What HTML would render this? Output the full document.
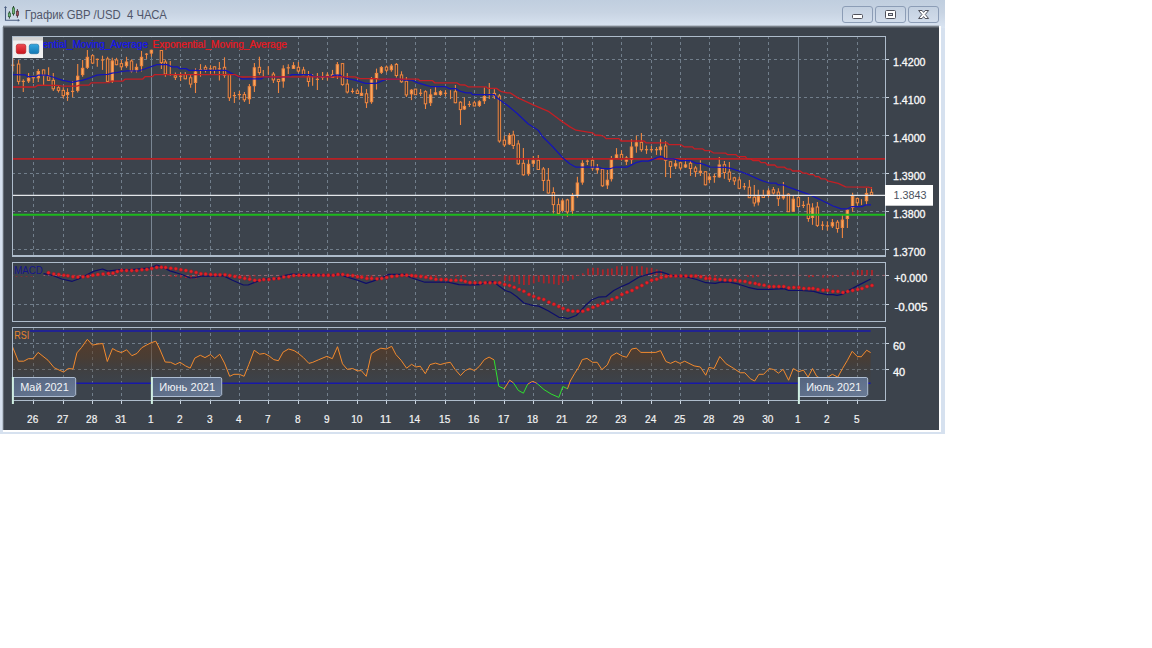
<!DOCTYPE html>
<html><head><meta charset="utf-8"><title>GBP/USD</title>
<style>
html,body{margin:0;padding:0;background:#fff;}
body{width:1152px;height:648px;overflow:hidden;position:relative;font-family:"Liberation Sans",sans-serif;}
#win{position:absolute;left:0;top:0;width:945px;height:434px;background:#d6e1ef;}
#tb{position:absolute;left:0;top:0;width:945px;height:28px;background:linear-gradient(180deg,#c0cedf 0%,#c8d4e3 45%,#d5e0ee 85%,#dae5f2 100%);}
#dark{position:absolute;left:3px;top:27px;width:936px;height:403px;background:#3c434c;}
#wr{position:absolute;left:939px;top:26px;width:2px;height:406px;background:#fff;}
#wb{position:absolute;left:3px;top:430px;width:938px;height:2px;background:#fff;}
svg{position:absolute;left:0;top:0;}
text{font-family:"Liberation Sans",sans-serif;}
</style></head><body>
<div id="win"><div id="tb"></div><div id="dark"></div><div id="wr"></div><div id="wb"></div></div>
<svg width="1152" height="648" viewBox="0 0 1152 648">
<defs>
<linearGradient id="sh" x1="0" y1="0" x2="0" y2="1"><stop offset="0" stop-color="#8d949d" stop-opacity="0.9"/><stop offset="1" stop-color="#3c434c"/></linearGradient>
<linearGradient id="shl" x1="0" y1="0" x2="1" y2="0"><stop offset="0" stop-color="#c9d4e2"/><stop offset="1" stop-color="#3c434c"/></linearGradient>
<linearGradient id="lab" x1="0" y1="0" x2="1" y2="1"><stop offset="0" stop-color="#54647f"/><stop offset="1" stop-color="#6a7b96"/></linearGradient>
<linearGradient id="rsq" x1="0" y1="0" x2="0" y2="1"><stop offset="0" stop-color="#f04a52"/><stop offset="1" stop-color="#c8141c"/></linearGradient>
<linearGradient id="bsq" x1="0" y1="0" x2="0" y2="1"><stop offset="0" stop-color="#35a8e0"/><stop offset="1" stop-color="#1378b4"/></linearGradient>
<linearGradient id="rf" gradientUnits="userSpaceOnUse" x1="0" y1="338" x2="0" y2="384"><stop offset="0" stop-color="#683814" stop-opacity="0.62"/><stop offset="0.43" stop-color="#5a3618" stop-opacity="0.46"/><stop offset="0.74" stop-color="#4a3420" stop-opacity="0.2"/><stop offset="0.9" stop-color="#4a3420" stop-opacity="0.08"/><stop offset="1" stop-color="#4a3420" stop-opacity="0.02"/></linearGradient>
<linearGradient id="btn" x1="0" y1="0" x2="0" y2="1"><stop offset="0" stop-color="#c3d0e0"/><stop offset="1" stop-color="#d2ddeb"/></linearGradient>
</defs>

<rect x="3" y="25.5" width="936" height="3" fill="url(#sh)"/>
<rect x="2.2" y="27" width="1.8" height="403" fill="url(#shl)"/>
<g id="title">
<path d="M5.5 7V20.3H19" fill="none" stroke="#4b5e80" stroke-width="1.1"/>
<path d="M5.5 5.9l-1.5 2.2h3zM20 20.3l-2.2-1.4v2.8z" fill="#4b5e80"/>
<g stroke="#2f3f38" stroke-width="1"><path d="M9.4 11.2v7.4M13.5 6v9.6"/></g>
<path d="M17.4 9.1v8.6" stroke="#4a2c38" stroke-width="1"/>
<rect x="8.3" y="13" width="2.2" height="3.7" fill="#6fb476" stroke="#2c5c34" stroke-width="0.7"/>
<rect x="12.4" y="7.8" width="2.2" height="6" fill="#6fb476" stroke="#2c5c34" stroke-width="0.7"/>
<rect x="16.3" y="11.2" width="2.2" height="4.4" fill="#a8545c" stroke="#4a2c38" stroke-width="0.7"/>
<text x="24.8" y="18.8" font-size="12" fill="#50566a" textLength="142" lengthAdjust="spacingAndGlyphs" xml:space="preserve">График GBP /USD  4 ЧАСА</text>
<rect x="842.5" y="6.5" width="30" height="16" rx="2.5" fill="url(#btn)" stroke="#8c9db6" stroke-width="1"/>
<rect x="875.5" y="6.5" width="30" height="16" rx="2.5" fill="url(#btn)" stroke="#8c9db6" stroke-width="1"/>
<rect x="908.5" y="6.5" width="30" height="16" rx="2.5" fill="url(#btn)" stroke="#8c9db6" stroke-width="1"/>
<rect x="852.5" y="14.5" width="10" height="4" rx="1" fill="#fff" stroke="#50525c" stroke-width="1"/>
<rect x="885.5" y="10.5" width="10" height="8" rx="1" fill="#fff" stroke="#50525c" stroke-width="1"/>
<rect x="888.5" y="13.5" width="4" height="2" fill="#d8dde6" stroke="#50525c" stroke-width="1"/>
<path d="M918.6 10.5h3.5l1.5 1.9 1.5-1.9h3.5l-3.3 4 3.3 4h-3.5l-1.5-1.9-1.5 1.9h-3.5l3.3-4z" fill="#fff" stroke="#50525c" stroke-width="1" stroke-linejoin="round"/>
</g>
<g id="grid" shape-rendering="crispEdges">
<line x1="33.4" y1="36" x2="33.4" y2="256" stroke="#717e8b" stroke-width="1" stroke-dasharray="3 3" stroke-dashoffset="0"/>
<line x1="63.4" y1="36" x2="63.4" y2="256" stroke="#717e8b" stroke-width="1" stroke-dasharray="3 3" stroke-dashoffset="0"/>
<line x1="92.4" y1="36" x2="92.4" y2="256" stroke="#717e8b" stroke-width="1" stroke-dasharray="3 3" stroke-dashoffset="0"/>
<line x1="121.5" y1="36" x2="121.5" y2="256" stroke="#717e8b" stroke-width="1" stroke-dasharray="3 3" stroke-dashoffset="0"/>
<line x1="151.5" y1="36.5" x2="151.5" y2="256" stroke="#7a8693" stroke-width="1"/>
<line x1="180.6" y1="36" x2="180.6" y2="256" stroke="#717e8b" stroke-width="1" stroke-dasharray="3 3" stroke-dashoffset="0"/>
<line x1="210.4" y1="36" x2="210.4" y2="256" stroke="#717e8b" stroke-width="1" stroke-dasharray="3 3" stroke-dashoffset="0"/>
<line x1="239.4" y1="36" x2="239.4" y2="256" stroke="#717e8b" stroke-width="1" stroke-dasharray="3 3" stroke-dashoffset="0"/>
<line x1="268.4" y1="36" x2="268.4" y2="256" stroke="#717e8b" stroke-width="1" stroke-dasharray="3 3" stroke-dashoffset="0"/>
<line x1="298.4" y1="36" x2="298.4" y2="256" stroke="#717e8b" stroke-width="1" stroke-dasharray="3 3" stroke-dashoffset="0"/>
<line x1="327.5" y1="36" x2="327.5" y2="256" stroke="#717e8b" stroke-width="1" stroke-dasharray="3 3" stroke-dashoffset="0"/>
<line x1="357.5" y1="36" x2="357.5" y2="256" stroke="#717e8b" stroke-width="1" stroke-dasharray="3 3" stroke-dashoffset="0"/>
<line x1="386.4" y1="36" x2="386.4" y2="256" stroke="#717e8b" stroke-width="1" stroke-dasharray="3 3" stroke-dashoffset="0"/>
<line x1="415.3" y1="36" x2="415.3" y2="256" stroke="#717e8b" stroke-width="1" stroke-dasharray="3 3" stroke-dashoffset="0"/>
<line x1="445.4" y1="36" x2="445.4" y2="256" stroke="#717e8b" stroke-width="1" stroke-dasharray="3 3" stroke-dashoffset="0"/>
<line x1="474.4" y1="36" x2="474.4" y2="256" stroke="#717e8b" stroke-width="1" stroke-dasharray="3 3" stroke-dashoffset="0"/>
<line x1="504.4" y1="36" x2="504.4" y2="256" stroke="#717e8b" stroke-width="1" stroke-dasharray="3 3" stroke-dashoffset="0"/>
<line x1="533.3" y1="36" x2="533.3" y2="256" stroke="#717e8b" stroke-width="1" stroke-dasharray="3 3" stroke-dashoffset="0"/>
<line x1="562.5" y1="36" x2="562.5" y2="256" stroke="#717e8b" stroke-width="1" stroke-dasharray="3 3" stroke-dashoffset="0"/>
<line x1="592.4" y1="36" x2="592.4" y2="256" stroke="#717e8b" stroke-width="1" stroke-dasharray="3 3" stroke-dashoffset="0"/>
<line x1="621.5" y1="36" x2="621.5" y2="256" stroke="#717e8b" stroke-width="1" stroke-dasharray="3 3" stroke-dashoffset="0"/>
<line x1="651.4" y1="36" x2="651.4" y2="256" stroke="#717e8b" stroke-width="1" stroke-dasharray="3 3" stroke-dashoffset="0"/>
<line x1="680.5" y1="36" x2="680.5" y2="256" stroke="#717e8b" stroke-width="1" stroke-dasharray="3 3" stroke-dashoffset="0"/>
<line x1="709.5" y1="36" x2="709.5" y2="256" stroke="#717e8b" stroke-width="1" stroke-dasharray="3 3" stroke-dashoffset="0"/>
<line x1="739.3" y1="36" x2="739.3" y2="256" stroke="#717e8b" stroke-width="1" stroke-dasharray="3 3" stroke-dashoffset="0"/>
<line x1="768.5" y1="36" x2="768.5" y2="256" stroke="#717e8b" stroke-width="1" stroke-dasharray="3 3" stroke-dashoffset="0"/>
<line x1="798.6" y1="36.5" x2="798.6" y2="256" stroke="#7a8693" stroke-width="1"/>
<line x1="827.5" y1="36" x2="827.5" y2="256" stroke="#717e8b" stroke-width="1" stroke-dasharray="3 3" stroke-dashoffset="0"/>
<line x1="857.4" y1="36" x2="857.4" y2="256" stroke="#717e8b" stroke-width="1" stroke-dasharray="3 3" stroke-dashoffset="0"/>
<line x1="12" y1="59.4" x2="885.5" y2="59.4" stroke="#717e8b" stroke-width="1" stroke-dasharray="3 3"/>
<line x1="885.5" y1="59.4" x2="889" y2="59.4" stroke="#c9d3de" stroke-width="1"/>
<line x1="12" y1="97.45" x2="885.5" y2="97.45" stroke="#717e8b" stroke-width="1" stroke-dasharray="3 3"/>
<line x1="885.5" y1="97.45" x2="889" y2="97.45" stroke="#c9d3de" stroke-width="1"/>
<line x1="12" y1="135.5" x2="885.5" y2="135.5" stroke="#717e8b" stroke-width="1" stroke-dasharray="3 3"/>
<line x1="885.5" y1="135.5" x2="889" y2="135.5" stroke="#c9d3de" stroke-width="1"/>
<line x1="12" y1="173.55" x2="885.5" y2="173.55" stroke="#717e8b" stroke-width="1" stroke-dasharray="3 3"/>
<line x1="885.5" y1="173.55" x2="889" y2="173.55" stroke="#c9d3de" stroke-width="1"/>
<line x1="12" y1="211.6" x2="885.5" y2="211.6" stroke="#717e8b" stroke-width="1" stroke-dasharray="3 3"/>
<line x1="885.5" y1="211.6" x2="889" y2="211.6" stroke="#c9d3de" stroke-width="1"/>
<line x1="12" y1="249.7" x2="885.5" y2="249.7" stroke="#717e8b" stroke-width="1" stroke-dasharray="3 3"/>
<line x1="885.5" y1="249.7" x2="889" y2="249.7" stroke="#c9d3de" stroke-width="1"/>
<line x1="33.4" y1="262" x2="33.4" y2="321.3" stroke="#717e8b" stroke-width="1" stroke-dasharray="3 3" stroke-dashoffset="0"/>
<line x1="63.4" y1="262" x2="63.4" y2="321.3" stroke="#717e8b" stroke-width="1" stroke-dasharray="3 3" stroke-dashoffset="0"/>
<line x1="92.4" y1="262" x2="92.4" y2="321.3" stroke="#717e8b" stroke-width="1" stroke-dasharray="3 3" stroke-dashoffset="0"/>
<line x1="121.5" y1="262" x2="121.5" y2="321.3" stroke="#717e8b" stroke-width="1" stroke-dasharray="3 3" stroke-dashoffset="0"/>
<line x1="151.5" y1="262.5" x2="151.5" y2="321.3" stroke="#7a8693" stroke-width="1"/>
<line x1="180.6" y1="262" x2="180.6" y2="321.3" stroke="#717e8b" stroke-width="1" stroke-dasharray="3 3" stroke-dashoffset="0"/>
<line x1="210.4" y1="262" x2="210.4" y2="321.3" stroke="#717e8b" stroke-width="1" stroke-dasharray="3 3" stroke-dashoffset="0"/>
<line x1="239.4" y1="262" x2="239.4" y2="321.3" stroke="#717e8b" stroke-width="1" stroke-dasharray="3 3" stroke-dashoffset="0"/>
<line x1="268.4" y1="262" x2="268.4" y2="321.3" stroke="#717e8b" stroke-width="1" stroke-dasharray="3 3" stroke-dashoffset="0"/>
<line x1="298.4" y1="262" x2="298.4" y2="321.3" stroke="#717e8b" stroke-width="1" stroke-dasharray="3 3" stroke-dashoffset="0"/>
<line x1="327.5" y1="262" x2="327.5" y2="321.3" stroke="#717e8b" stroke-width="1" stroke-dasharray="3 3" stroke-dashoffset="0"/>
<line x1="357.5" y1="262" x2="357.5" y2="321.3" stroke="#717e8b" stroke-width="1" stroke-dasharray="3 3" stroke-dashoffset="0"/>
<line x1="386.4" y1="262" x2="386.4" y2="321.3" stroke="#717e8b" stroke-width="1" stroke-dasharray="3 3" stroke-dashoffset="0"/>
<line x1="415.3" y1="262" x2="415.3" y2="321.3" stroke="#717e8b" stroke-width="1" stroke-dasharray="3 3" stroke-dashoffset="0"/>
<line x1="445.4" y1="262" x2="445.4" y2="321.3" stroke="#717e8b" stroke-width="1" stroke-dasharray="3 3" stroke-dashoffset="0"/>
<line x1="474.4" y1="262" x2="474.4" y2="321.3" stroke="#717e8b" stroke-width="1" stroke-dasharray="3 3" stroke-dashoffset="0"/>
<line x1="504.4" y1="262" x2="504.4" y2="321.3" stroke="#717e8b" stroke-width="1" stroke-dasharray="3 3" stroke-dashoffset="0"/>
<line x1="533.3" y1="262" x2="533.3" y2="321.3" stroke="#717e8b" stroke-width="1" stroke-dasharray="3 3" stroke-dashoffset="0"/>
<line x1="562.5" y1="262" x2="562.5" y2="321.3" stroke="#717e8b" stroke-width="1" stroke-dasharray="3 3" stroke-dashoffset="0"/>
<line x1="592.4" y1="262" x2="592.4" y2="321.3" stroke="#717e8b" stroke-width="1" stroke-dasharray="3 3" stroke-dashoffset="0"/>
<line x1="621.5" y1="262" x2="621.5" y2="321.3" stroke="#717e8b" stroke-width="1" stroke-dasharray="3 3" stroke-dashoffset="0"/>
<line x1="651.4" y1="262" x2="651.4" y2="321.3" stroke="#717e8b" stroke-width="1" stroke-dasharray="3 3" stroke-dashoffset="0"/>
<line x1="680.5" y1="262" x2="680.5" y2="321.3" stroke="#717e8b" stroke-width="1" stroke-dasharray="3 3" stroke-dashoffset="0"/>
<line x1="709.5" y1="262" x2="709.5" y2="321.3" stroke="#717e8b" stroke-width="1" stroke-dasharray="3 3" stroke-dashoffset="0"/>
<line x1="739.3" y1="262" x2="739.3" y2="321.3" stroke="#717e8b" stroke-width="1" stroke-dasharray="3 3" stroke-dashoffset="0"/>
<line x1="768.5" y1="262" x2="768.5" y2="321.3" stroke="#717e8b" stroke-width="1" stroke-dasharray="3 3" stroke-dashoffset="0"/>
<line x1="798.6" y1="262.5" x2="798.6" y2="321.3" stroke="#7a8693" stroke-width="1"/>
<line x1="827.5" y1="262" x2="827.5" y2="321.3" stroke="#717e8b" stroke-width="1" stroke-dasharray="3 3" stroke-dashoffset="0"/>
<line x1="857.4" y1="262" x2="857.4" y2="321.3" stroke="#717e8b" stroke-width="1" stroke-dasharray="3 3" stroke-dashoffset="0"/>
<line x1="12" y1="275.3" x2="885.5" y2="275.3" stroke="#717e8b" stroke-width="1" stroke-dasharray="3 3"/>
<line x1="885.5" y1="275.3" x2="889" y2="275.3" stroke="#c9d3de" stroke-width="1"/>
<line x1="12" y1="304.4" x2="885.5" y2="304.4" stroke="#717e8b" stroke-width="1" stroke-dasharray="3 3"/>
<line x1="885.5" y1="304.4" x2="889" y2="304.4" stroke="#c9d3de" stroke-width="1"/>
<line x1="33.4" y1="327" x2="33.4" y2="400.5" stroke="#717e8b" stroke-width="1" stroke-dasharray="3 3" stroke-dashoffset="0"/>
<line x1="63.4" y1="327" x2="63.4" y2="400.5" stroke="#717e8b" stroke-width="1" stroke-dasharray="3 3" stroke-dashoffset="0"/>
<line x1="92.4" y1="327" x2="92.4" y2="400.5" stroke="#717e8b" stroke-width="1" stroke-dasharray="3 3" stroke-dashoffset="0"/>
<line x1="121.5" y1="327" x2="121.5" y2="400.5" stroke="#717e8b" stroke-width="1" stroke-dasharray="3 3" stroke-dashoffset="0"/>
<line x1="151.5" y1="327.5" x2="151.5" y2="400.5" stroke="#7a8693" stroke-width="1"/>
<line x1="180.6" y1="327" x2="180.6" y2="400.5" stroke="#717e8b" stroke-width="1" stroke-dasharray="3 3" stroke-dashoffset="0"/>
<line x1="210.4" y1="327" x2="210.4" y2="400.5" stroke="#717e8b" stroke-width="1" stroke-dasharray="3 3" stroke-dashoffset="0"/>
<line x1="239.4" y1="327" x2="239.4" y2="400.5" stroke="#717e8b" stroke-width="1" stroke-dasharray="3 3" stroke-dashoffset="0"/>
<line x1="268.4" y1="327" x2="268.4" y2="400.5" stroke="#717e8b" stroke-width="1" stroke-dasharray="3 3" stroke-dashoffset="0"/>
<line x1="298.4" y1="327" x2="298.4" y2="400.5" stroke="#717e8b" stroke-width="1" stroke-dasharray="3 3" stroke-dashoffset="0"/>
<line x1="327.5" y1="327" x2="327.5" y2="400.5" stroke="#717e8b" stroke-width="1" stroke-dasharray="3 3" stroke-dashoffset="0"/>
<line x1="357.5" y1="327" x2="357.5" y2="400.5" stroke="#717e8b" stroke-width="1" stroke-dasharray="3 3" stroke-dashoffset="0"/>
<line x1="386.4" y1="327" x2="386.4" y2="400.5" stroke="#717e8b" stroke-width="1" stroke-dasharray="3 3" stroke-dashoffset="0"/>
<line x1="415.3" y1="327" x2="415.3" y2="400.5" stroke="#717e8b" stroke-width="1" stroke-dasharray="3 3" stroke-dashoffset="0"/>
<line x1="445.4" y1="327" x2="445.4" y2="400.5" stroke="#717e8b" stroke-width="1" stroke-dasharray="3 3" stroke-dashoffset="0"/>
<line x1="474.4" y1="327" x2="474.4" y2="400.5" stroke="#717e8b" stroke-width="1" stroke-dasharray="3 3" stroke-dashoffset="0"/>
<line x1="504.4" y1="327" x2="504.4" y2="400.5" stroke="#717e8b" stroke-width="1" stroke-dasharray="3 3" stroke-dashoffset="0"/>
<line x1="533.3" y1="327" x2="533.3" y2="400.5" stroke="#717e8b" stroke-width="1" stroke-dasharray="3 3" stroke-dashoffset="0"/>
<line x1="562.5" y1="327" x2="562.5" y2="400.5" stroke="#717e8b" stroke-width="1" stroke-dasharray="3 3" stroke-dashoffset="0"/>
<line x1="592.4" y1="327" x2="592.4" y2="400.5" stroke="#717e8b" stroke-width="1" stroke-dasharray="3 3" stroke-dashoffset="0"/>
<line x1="621.5" y1="327" x2="621.5" y2="400.5" stroke="#717e8b" stroke-width="1" stroke-dasharray="3 3" stroke-dashoffset="0"/>
<line x1="651.4" y1="327" x2="651.4" y2="400.5" stroke="#717e8b" stroke-width="1" stroke-dasharray="3 3" stroke-dashoffset="0"/>
<line x1="680.5" y1="327" x2="680.5" y2="400.5" stroke="#717e8b" stroke-width="1" stroke-dasharray="3 3" stroke-dashoffset="0"/>
<line x1="709.5" y1="327" x2="709.5" y2="400.5" stroke="#717e8b" stroke-width="1" stroke-dasharray="3 3" stroke-dashoffset="0"/>
<line x1="739.3" y1="327" x2="739.3" y2="400.5" stroke="#717e8b" stroke-width="1" stroke-dasharray="3 3" stroke-dashoffset="0"/>
<line x1="768.5" y1="327" x2="768.5" y2="400.5" stroke="#717e8b" stroke-width="1" stroke-dasharray="3 3" stroke-dashoffset="0"/>
<line x1="798.6" y1="327.5" x2="798.6" y2="400.5" stroke="#7a8693" stroke-width="1"/>
<line x1="827.5" y1="327" x2="827.5" y2="400.5" stroke="#717e8b" stroke-width="1" stroke-dasharray="3 3" stroke-dashoffset="0"/>
<line x1="857.4" y1="327" x2="857.4" y2="400.5" stroke="#717e8b" stroke-width="1" stroke-dasharray="3 3" stroke-dashoffset="0"/>
<line x1="12" y1="343.5" x2="885.5" y2="343.5" stroke="#717e8b" stroke-width="1" stroke-dasharray="3 3"/>
<line x1="885.5" y1="343.5" x2="889" y2="343.5" stroke="#c9d3de" stroke-width="1"/>
<line x1="12" y1="369.6" x2="885.5" y2="369.6" stroke="#717e8b" stroke-width="1" stroke-dasharray="3 3"/>
<line x1="885.5" y1="369.6" x2="889" y2="369.6" stroke="#c9d3de" stroke-width="1"/>
</g>
<g id="main" fill="none">
<line x1="12.9" y1="57.8" x2="12.9" y2="71.5" stroke="#ee8640" stroke-width="1.1"/>
<line x1="11.3" y1="65.2" x2="14.5" y2="65.2" stroke="#ee8640" stroke-width="1.2"/>
<line x1="18.6" y1="59.9" x2="18.6" y2="84.6" stroke="#ee8640" stroke-width="1.1"/>
<rect x="17.4" y="64.1" width="2.4" height="17.3" fill="#463a38" stroke="#ee8640" stroke-width="1"/>
<line x1="23.3" y1="79.3" x2="23.3" y2="91.9" stroke="#ee8640" stroke-width="1.1"/>
<line x1="21.7" y1="81.4" x2="24.9" y2="81.4" stroke="#ee8640" stroke-width="1.2"/>
<line x1="28.6" y1="73" x2="28.6" y2="83" stroke="#ee8640" stroke-width="1.1"/>
<rect x="27.4" y="78.3" width="2.4" height="2.6" fill="#f9a85e" stroke="#ee8640" stroke-width="1"/>
<line x1="33.3" y1="75.7" x2="33.3" y2="83" stroke="#ee8640" stroke-width="1.1"/>
<line x1="31.7" y1="77.7" x2="34.9" y2="77.7" stroke="#ee8640" stroke-width="1.2"/>
<line x1="38.3" y1="68.9" x2="38.3" y2="82" stroke="#ee8640" stroke-width="1.1"/>
<rect x="37.1" y="71.5" width="2.4" height="6.3" fill="#f9a85e" stroke="#ee8640" stroke-width="1"/>
<line x1="43.6" y1="69.4" x2="43.6" y2="85.1" stroke="#ee8640" stroke-width="1.1"/>
<rect x="42.4" y="69.9" width="2.4" height="5.3" fill="#463a38" stroke="#ee8640" stroke-width="1"/>
<line x1="48.6" y1="67.3" x2="48.6" y2="80.9" stroke="#ee8640" stroke-width="1.1"/>
<rect x="47.4" y="76.2" width="2.4" height="4.2" fill="#463a38" stroke="#ee8640" stroke-width="1"/>
<line x1="53.3" y1="73" x2="53.3" y2="90.9" stroke="#ee8640" stroke-width="1.1"/>
<rect x="52.1" y="80.4" width="2.4" height="8.4" fill="#463a38" stroke="#ee8640" stroke-width="1"/>
<line x1="58.5" y1="86.2" x2="58.5" y2="92.5" stroke="#ee8640" stroke-width="1.1"/>
<rect x="57.3" y="87.7" width="2.4" height="2.7" fill="#463a38" stroke="#ee8640" stroke-width="1"/>
<line x1="63.3" y1="87.2" x2="63.3" y2="98.2" stroke="#ee8640" stroke-width="1.1"/>
<rect x="62.1" y="90.4" width="2.4" height="5.2" fill="#463a38" stroke="#ee8640" stroke-width="1"/>
<line x1="67.5" y1="88.3" x2="67.5" y2="100.9" stroke="#ee8640" stroke-width="1.1"/>
<rect x="66.3" y="92.5" width="2.4" height="2.1" fill="#f9a85e" stroke="#ee8640" stroke-width="1"/>
<line x1="72.6" y1="80.9" x2="72.6" y2="97.2" stroke="#ee8640" stroke-width="1.1"/>
<line x1="71" y1="91.4" x2="74.2" y2="91.4" stroke="#ee8640" stroke-width="1.2"/>
<line x1="77.7" y1="64.1" x2="77.7" y2="92.5" stroke="#ee8640" stroke-width="1.1"/>
<rect x="76.5" y="76.2" width="2.4" height="14.2" fill="#f9a85e" stroke="#ee8640" stroke-width="1"/>
<line x1="82.6" y1="59.9" x2="82.6" y2="76.7" stroke="#ee8640" stroke-width="1.1"/>
<rect x="81.4" y="68.3" width="2.4" height="6.3" fill="#f9a85e" stroke="#ee8640" stroke-width="1"/>
<line x1="87.4" y1="50" x2="87.4" y2="68.9" stroke="#ee8640" stroke-width="1.1"/>
<rect x="86.2" y="57.3" width="2.4" height="10" fill="#f9a85e" stroke="#ee8640" stroke-width="1"/>
<line x1="92.6" y1="54.2" x2="92.6" y2="64.1" stroke="#ee8640" stroke-width="1.1"/>
<rect x="91.4" y="55.7" width="2.4" height="7.4" fill="#463a38" stroke="#ee8640" stroke-width="1"/>
<line x1="97.3" y1="58.4" x2="97.3" y2="66.8" stroke="#ee8640" stroke-width="1.1"/>
<line x1="95.7" y1="59.4" x2="98.9" y2="59.4" stroke="#ee8640" stroke-width="1.2"/>
<line x1="102.5" y1="55.7" x2="102.5" y2="69.9" stroke="#ee8640" stroke-width="1.1"/>
<line x1="100.9" y1="60" x2="104.1" y2="60" stroke="#ee8640" stroke-width="1.2"/>
<line x1="107.6" y1="56.8" x2="107.6" y2="82" stroke="#ee8640" stroke-width="1.1"/>
<rect x="106.4" y="58.9" width="2.4" height="22.5" fill="#463a38" stroke="#ee8640" stroke-width="1"/>
<line x1="112.3" y1="57.8" x2="112.3" y2="83" stroke="#ee8640" stroke-width="1.1"/>
<rect x="111.1" y="61" width="2.4" height="19.9" fill="#f9a85e" stroke="#ee8640" stroke-width="1"/>
<line x1="116.5" y1="57.8" x2="116.5" y2="65.2" stroke="#ee8640" stroke-width="1.1"/>
<rect x="115.3" y="60" width="2.4" height="4.7" fill="#463a38" stroke="#ee8640" stroke-width="1"/>
<line x1="121.4" y1="60" x2="121.4" y2="70" stroke="#ee8640" stroke-width="1.1"/>
<rect x="120.2" y="63.6" width="2.4" height="3.2" fill="#463a38" stroke="#ee8640" stroke-width="1"/>
<line x1="126.5" y1="56.8" x2="126.5" y2="67.8" stroke="#ee8640" stroke-width="1.1"/>
<rect x="125.3" y="62" width="2.4" height="3.7" fill="#f9a85e" stroke="#ee8640" stroke-width="1"/>
<line x1="131.5" y1="59.4" x2="131.5" y2="72.5" stroke="#ee8640" stroke-width="1.1"/>
<rect x="130.3" y="61" width="2.4" height="10" fill="#463a38" stroke="#ee8640" stroke-width="1"/>
<line x1="136.5" y1="63.6" x2="136.5" y2="72.5" stroke="#ee8640" stroke-width="1.1"/>
<rect x="135.3" y="67.3" width="2.4" height="2.6" fill="#f9a85e" stroke="#ee8640" stroke-width="1"/>
<line x1="141.5" y1="51" x2="141.5" y2="71.5" stroke="#ee8640" stroke-width="1.1"/>
<rect x="140.3" y="57.3" width="2.4" height="8.4" fill="#f9a85e" stroke="#ee8640" stroke-width="1"/>
<line x1="146.5" y1="53.1" x2="146.5" y2="58.9" stroke="#ee8640" stroke-width="1.1"/>
<line x1="144.9" y1="54.2" x2="148.1" y2="54.2" stroke="#ee8640" stroke-width="1.2"/>
<line x1="151.4" y1="49.4" x2="151.4" y2="56.8" stroke="#ee8640" stroke-width="1.1"/>
<rect x="150.2" y="50" width="2.4" height="3.1" fill="#f9a85e" stroke="#ee8640" stroke-width="1"/>
<line x1="161.4" y1="50" x2="161.4" y2="68.9" stroke="#ee8640" stroke-width="1.1"/>
<rect x="160.2" y="50.5" width="2.4" height="12.1" fill="#463a38" stroke="#ee8640" stroke-width="1"/>
<line x1="165.4" y1="59.4" x2="165.4" y2="76.7" stroke="#ee8640" stroke-width="1.1"/>
<rect x="164.2" y="62" width="2.4" height="12.1" fill="#463a38" stroke="#ee8640" stroke-width="1"/>
<line x1="170.3" y1="61" x2="170.3" y2="75.7" stroke="#ee8640" stroke-width="1.1"/>
<line x1="175.4" y1="72.5" x2="175.4" y2="79.9" stroke="#ee8640" stroke-width="1.1"/>
<rect x="174.2" y="75.7" width="2.4" height="1.6" fill="#463a38" stroke="#ee8640" stroke-width="1"/>
<line x1="180.6" y1="72.5" x2="180.6" y2="80.9" stroke="#ee8640" stroke-width="1.1"/>
<line x1="179" y1="76.2" x2="182.2" y2="76.2" stroke="#ee8640" stroke-width="1.2"/>
<line x1="185.3" y1="72" x2="185.3" y2="79.3" stroke="#ee8640" stroke-width="1.1"/>
<rect x="184.1" y="74.6" width="2.4" height="4.2" fill="#463a38" stroke="#ee8640" stroke-width="1"/>
<line x1="190.6" y1="74.1" x2="190.6" y2="87.7" stroke="#ee8640" stroke-width="1.1"/>
<rect x="189.4" y="77.8" width="2.4" height="6.3" fill="#463a38" stroke="#ee8640" stroke-width="1"/>
<line x1="195.5" y1="68.3" x2="195.5" y2="93" stroke="#ee8640" stroke-width="1.1"/>
<rect x="194.3" y="72" width="2.4" height="10.5" fill="#f9a85e" stroke="#ee8640" stroke-width="1"/>
<line x1="200.5" y1="64.1" x2="200.5" y2="76.7" stroke="#ee8640" stroke-width="1.1"/>
<line x1="198.9" y1="69.7" x2="202.1" y2="69.7" stroke="#ee8640" stroke-width="1.2"/>
<line x1="205.5" y1="65.2" x2="205.5" y2="72.5" stroke="#ee8640" stroke-width="1.1"/>
<rect x="204.3" y="67.3" width="2.4" height="2.6" fill="#463a38" stroke="#ee8640" stroke-width="1"/>
<line x1="210.5" y1="65.2" x2="210.5" y2="73.6" stroke="#ee8640" stroke-width="1.1"/>
<line x1="208.9" y1="68.9" x2="212.1" y2="68.9" stroke="#ee8640" stroke-width="1.2"/>
<line x1="214.5" y1="66.2" x2="214.5" y2="73.6" stroke="#ee8640" stroke-width="1.1"/>
<rect x="213.3" y="66.8" width="2.4" height="3.6" fill="#463a38" stroke="#ee8640" stroke-width="1"/>
<line x1="219.4" y1="62" x2="219.4" y2="80.4" stroke="#ee8640" stroke-width="1.1"/>
<line x1="217.8" y1="68.9" x2="221" y2="68.9" stroke="#ee8640" stroke-width="1.2"/>
<line x1="224.5" y1="57.3" x2="224.5" y2="77.8" stroke="#ee8640" stroke-width="1.1"/>
<rect x="223.3" y="67.3" width="2.4" height="7.9" fill="#463a38" stroke="#ee8640" stroke-width="1"/>
<line x1="229.4" y1="74.1" x2="229.4" y2="100.9" stroke="#ee8640" stroke-width="1.1"/>
<rect x="228.2" y="74.6" width="2.4" height="23.1" fill="#463a38" stroke="#ee8640" stroke-width="1"/>
<line x1="234.4" y1="91.9" x2="234.4" y2="103" stroke="#ee8640" stroke-width="1.1"/>
<line x1="232.8" y1="95.6" x2="236" y2="95.6" stroke="#ee8640" stroke-width="1.2"/>
<line x1="239.4" y1="90.9" x2="239.4" y2="99.8" stroke="#ee8640" stroke-width="1.1"/>
<line x1="237.8" y1="94.6" x2="241" y2="94.6" stroke="#ee8640" stroke-width="1.2"/>
<line x1="244.4" y1="92" x2="244.4" y2="101.9" stroke="#ee8640" stroke-width="1.1"/>
<rect x="243.2" y="94.6" width="2.4" height="5.2" fill="#463a38" stroke="#ee8640" stroke-width="1"/>
<line x1="249.4" y1="84.1" x2="249.4" y2="104" stroke="#ee8640" stroke-width="1.1"/>
<rect x="248.2" y="86.7" width="2.4" height="12.1" fill="#f9a85e" stroke="#ee8640" stroke-width="1"/>
<line x1="254.4" y1="63.1" x2="254.4" y2="92" stroke="#ee8640" stroke-width="1.1"/>
<rect x="253.2" y="67.8" width="2.4" height="17.9" fill="#f9a85e" stroke="#ee8640" stroke-width="1"/>
<line x1="259.4" y1="56.8" x2="259.4" y2="74.7" stroke="#ee8640" stroke-width="1.1"/>
<rect x="258.2" y="67.3" width="2.4" height="5.3" fill="#463a38" stroke="#ee8640" stroke-width="1"/>
<line x1="263.3" y1="69.9" x2="263.3" y2="76.8" stroke="#ee8640" stroke-width="1.1"/>
<line x1="268.3" y1="66.3" x2="268.3" y2="74.7" stroke="#ee8640" stroke-width="1.1"/>
<line x1="273.4" y1="72" x2="273.4" y2="83" stroke="#ee8640" stroke-width="1.1"/>
<rect x="272.2" y="74.1" width="2.4" height="5.8" fill="#463a38" stroke="#ee8640" stroke-width="1"/>
<line x1="278.5" y1="78.9" x2="278.5" y2="93" stroke="#ee8640" stroke-width="1.1"/>
<rect x="277.3" y="79.4" width="2.4" height="2.1" fill="#463a38" stroke="#ee8640" stroke-width="1"/>
<line x1="283.3" y1="65.2" x2="283.3" y2="87.8" stroke="#ee8640" stroke-width="1.1"/>
<rect x="282.1" y="68.9" width="2.4" height="12.1" fill="#f9a85e" stroke="#ee8640" stroke-width="1"/>
<line x1="288.3" y1="64.2" x2="288.3" y2="74.1" stroke="#ee8640" stroke-width="1.1"/>
<line x1="286.7" y1="67.8" x2="289.9" y2="67.8" stroke="#ee8640" stroke-width="1.2"/>
<line x1="293.5" y1="62.1" x2="293.5" y2="68.9" stroke="#ee8640" stroke-width="1.1"/>
<rect x="292.3" y="65.7" width="2.4" height="2.7" fill="#f9a85e" stroke="#ee8640" stroke-width="1"/>
<line x1="298.4" y1="62.1" x2="298.4" y2="72.6" stroke="#ee8640" stroke-width="1.1"/>
<rect x="297.2" y="67.3" width="2.4" height="3.7" fill="#463a38" stroke="#ee8640" stroke-width="1"/>
<line x1="303.5" y1="66.8" x2="303.5" y2="75.2" stroke="#ee8640" stroke-width="1.1"/>
<rect x="302.3" y="69.9" width="2.4" height="4.8" fill="#463a38" stroke="#ee8640" stroke-width="1"/>
<line x1="308.5" y1="71" x2="308.5" y2="86.7" stroke="#ee8640" stroke-width="1.1"/>
<rect x="307.3" y="76.8" width="2.4" height="4.7" fill="#463a38" stroke="#ee8640" stroke-width="1"/>
<line x1="312.6" y1="74.1" x2="312.6" y2="85.7" stroke="#ee8640" stroke-width="1.1"/>
<line x1="317.4" y1="73.1" x2="317.4" y2="89.9" stroke="#ee8640" stroke-width="1.1"/>
<line x1="315.8" y1="79.4" x2="319" y2="79.4" stroke="#ee8640" stroke-width="1.2"/>
<line x1="322.6" y1="72" x2="322.6" y2="79.9" stroke="#ee8640" stroke-width="1.1"/>
<line x1="321" y1="77.3" x2="324.2" y2="77.3" stroke="#ee8640" stroke-width="1.2"/>
<line x1="327.4" y1="72.6" x2="327.4" y2="80.4" stroke="#ee8640" stroke-width="1.1"/>
<line x1="325.8" y1="75.2" x2="329" y2="75.2" stroke="#ee8640" stroke-width="1.2"/>
<line x1="332.5" y1="69.9" x2="332.5" y2="77.8" stroke="#ee8640" stroke-width="1.1"/>
<rect x="331.3" y="74.7" width="2.4" height="2.8" fill="#463a38" stroke="#ee8640" stroke-width="1"/>
<line x1="337.4" y1="62.1" x2="337.4" y2="78.9" stroke="#ee8640" stroke-width="1.1"/>
<rect x="336.2" y="64.7" width="2.4" height="10" fill="#f9a85e" stroke="#ee8640" stroke-width="1"/>
<line x1="342.5" y1="63.1" x2="342.5" y2="85.7" stroke="#ee8640" stroke-width="1.1"/>
<rect x="341.3" y="63.6" width="2.4" height="21" fill="#463a38" stroke="#ee8640" stroke-width="1"/>
<line x1="347.3" y1="73.1" x2="347.3" y2="93.5" stroke="#ee8640" stroke-width="1.1"/>
<rect x="346.1" y="84.1" width="2.4" height="7.9" fill="#463a38" stroke="#ee8640" stroke-width="1"/>
<line x1="352.5" y1="88.3" x2="352.5" y2="93.5" stroke="#ee8640" stroke-width="1.1"/>
<line x1="350.9" y1="91.4" x2="354.1" y2="91.4" stroke="#ee8640" stroke-width="1.2"/>
<line x1="357.4" y1="88.8" x2="357.4" y2="94.1" stroke="#ee8640" stroke-width="1.1"/>
<rect x="356.2" y="90.9" width="2.4" height="2.6" fill="#463a38" stroke="#ee8640" stroke-width="1"/>
<line x1="361.5" y1="86" x2="361.5" y2="95.9" stroke="#ee8640" stroke-width="1.1"/>
<rect x="360.3" y="93.3" width="2.4" height="2.1" fill="#f9a85e" stroke="#ee8640" stroke-width="1"/>
<line x1="366.5" y1="89.1" x2="366.5" y2="108" stroke="#ee8640" stroke-width="1.1"/>
<rect x="365.3" y="93.8" width="2.4" height="8.9" fill="#463a38" stroke="#ee8640" stroke-width="1"/>
<line x1="371.5" y1="77" x2="371.5" y2="103.8" stroke="#ee8640" stroke-width="1.1"/>
<rect x="370.3" y="79.7" width="2.4" height="22" fill="#f9a85e" stroke="#ee8640" stroke-width="1"/>
<line x1="376.5" y1="68.6" x2="376.5" y2="89.6" stroke="#ee8640" stroke-width="1.1"/>
<rect x="375.3" y="73.4" width="2.4" height="5.2" fill="#f9a85e" stroke="#ee8640" stroke-width="1"/>
<line x1="381.4" y1="66" x2="381.4" y2="73.9" stroke="#ee8640" stroke-width="1.1"/>
<rect x="380.2" y="67.6" width="2.4" height="4.7" fill="#f9a85e" stroke="#ee8640" stroke-width="1"/>
<line x1="386.5" y1="65.5" x2="386.5" y2="72.3" stroke="#ee8640" stroke-width="1.1"/>
<rect x="385.3" y="67.1" width="2.4" height="3.1" fill="#463a38" stroke="#ee8640" stroke-width="1"/>
<line x1="391.4" y1="63.9" x2="391.4" y2="71.8" stroke="#ee8640" stroke-width="1.1"/>
<rect x="390.2" y="66" width="2.4" height="3.7" fill="#f9a85e" stroke="#ee8640" stroke-width="1"/>
<line x1="396.4" y1="62.9" x2="396.4" y2="77.6" stroke="#ee8640" stroke-width="1.1"/>
<rect x="395.2" y="64.4" width="2.4" height="11.1" fill="#463a38" stroke="#ee8640" stroke-width="1"/>
<line x1="401.5" y1="71.3" x2="401.5" y2="82.8" stroke="#ee8640" stroke-width="1.1"/>
<rect x="400.3" y="74.9" width="2.4" height="6.9" fill="#463a38" stroke="#ee8640" stroke-width="1"/>
<line x1="406.4" y1="77" x2="406.4" y2="97" stroke="#ee8640" stroke-width="1.1"/>
<rect x="405.2" y="81.2" width="2.4" height="13.7" fill="#463a38" stroke="#ee8640" stroke-width="1"/>
<line x1="411.5" y1="89.1" x2="411.5" y2="100.1" stroke="#ee8640" stroke-width="1.1"/>
<rect x="410.3" y="90.2" width="2.4" height="3.6" fill="#f9a85e" stroke="#ee8640" stroke-width="1"/>
<line x1="415.5" y1="89.1" x2="415.5" y2="94.7" stroke="#ee8640" stroke-width="1.1"/>
<rect x="414.3" y="89.1" width="2.4" height="5.6" fill="#463a38" stroke="#ee8640" stroke-width="1"/>
<line x1="420.6" y1="89.1" x2="420.6" y2="95.9" stroke="#ee8640" stroke-width="1.1"/>
<line x1="419" y1="93.3" x2="422.2" y2="93.3" stroke="#ee8640" stroke-width="1.2"/>
<line x1="425.5" y1="90.2" x2="425.5" y2="109" stroke="#ee8640" stroke-width="1.1"/>
<rect x="424.3" y="91.7" width="2.4" height="12.1" fill="#463a38" stroke="#ee8640" stroke-width="1"/>
<line x1="430.6" y1="89.1" x2="430.6" y2="105.9" stroke="#ee8640" stroke-width="1.1"/>
<rect x="429.4" y="94.9" width="2.4" height="7.8" fill="#f9a85e" stroke="#ee8640" stroke-width="1"/>
<line x1="435.5" y1="87" x2="435.5" y2="94.9" stroke="#ee8640" stroke-width="1.1"/>
<rect x="434.3" y="92.8" width="2.4" height="1.9" fill="#f9a85e" stroke="#ee8640" stroke-width="1"/>
<line x1="440.5" y1="90.2" x2="440.5" y2="95.9" stroke="#ee8640" stroke-width="1.1"/>
<rect x="439.3" y="91.7" width="2.4" height="2.7" fill="#f9a85e" stroke="#ee8640" stroke-width="1"/>
<line x1="445.5" y1="90.2" x2="445.5" y2="96.4" stroke="#ee8640" stroke-width="1.1"/>
<line x1="443.9" y1="93.3" x2="447.1" y2="93.3" stroke="#ee8640" stroke-width="1.2"/>
<line x1="450.5" y1="90.2" x2="450.5" y2="99.1" stroke="#ee8640" stroke-width="1.1"/>
<line x1="455.4" y1="84.9" x2="455.4" y2="103.3" stroke="#ee8640" stroke-width="1.1"/>
<rect x="454.2" y="91.7" width="2.4" height="11" fill="#463a38" stroke="#ee8640" stroke-width="1"/>
<line x1="460.5" y1="101.2" x2="460.5" y2="125" stroke="#ee8640" stroke-width="1.1"/>
<rect x="459.3" y="102.2" width="2.4" height="7.4" fill="#463a38" stroke="#ee8640" stroke-width="1"/>
<line x1="464.4" y1="97.5" x2="464.4" y2="110.1" stroke="#ee8640" stroke-width="1.1"/>
<rect x="463.2" y="106.4" width="2.4" height="2.6" fill="#f9a85e" stroke="#ee8640" stroke-width="1"/>
<line x1="469.4" y1="100.9" x2="469.4" y2="107" stroke="#ee8640" stroke-width="1.1"/>
<line x1="467.8" y1="104.4" x2="471" y2="104.4" stroke="#ee8640" stroke-width="1.2"/>
<line x1="474.4" y1="100.7" x2="474.4" y2="106" stroke="#ee8640" stroke-width="1.1"/>
<rect x="473.2" y="102.8" width="2.4" height="3.2" fill="#463a38" stroke="#ee8640" stroke-width="1"/>
<line x1="479.4" y1="100.2" x2="479.4" y2="107" stroke="#ee8640" stroke-width="1.1"/>
<rect x="478.2" y="101.8" width="2.4" height="3.6" fill="#f9a85e" stroke="#ee8640" stroke-width="1"/>
<line x1="484.4" y1="87.6" x2="484.4" y2="103.9" stroke="#ee8640" stroke-width="1.1"/>
<rect x="483.2" y="96.5" width="2.4" height="4.2" fill="#f9a85e" stroke="#ee8640" stroke-width="1"/>
<line x1="489.3" y1="82.9" x2="489.3" y2="99.1" stroke="#ee8640" stroke-width="1.1"/>
<line x1="487.7" y1="94.4" x2="490.9" y2="94.4" stroke="#ee8640" stroke-width="1.2"/>
<line x1="494.4" y1="89.2" x2="494.4" y2="99.1" stroke="#ee8640" stroke-width="1.1"/>
<rect x="493.2" y="93.4" width="2.4" height="2.6" fill="#463a38" stroke="#ee8640" stroke-width="1"/>
<line x1="499.4" y1="93.9" x2="499.4" y2="142.8" stroke="#ee8640" stroke-width="1.1"/>
<rect x="498.2" y="96" width="2.4" height="45" fill="#463a38" stroke="#ee8640" stroke-width="1"/>
<line x1="504.4" y1="135.5" x2="504.4" y2="147" stroke="#ee8640" stroke-width="1.1"/>
<rect x="503.2" y="140.2" width="2.4" height="4.7" fill="#463a38" stroke="#ee8640" stroke-width="1"/>
<line x1="509.4" y1="132.9" x2="509.4" y2="144.9" stroke="#ee8640" stroke-width="1.1"/>
<rect x="508.2" y="135.5" width="2.4" height="8.4" fill="#f9a85e" stroke="#ee8640" stroke-width="1"/>
<line x1="513.3" y1="130.8" x2="513.3" y2="149.1" stroke="#ee8640" stroke-width="1.1"/>
<rect x="512.1" y="135" width="2.4" height="10.5" fill="#463a38" stroke="#ee8640" stroke-width="1"/>
<line x1="518.3" y1="140.2" x2="518.3" y2="164.9" stroke="#ee8640" stroke-width="1.1"/>
<rect x="517.1" y="143.9" width="2.4" height="19.9" fill="#463a38" stroke="#ee8640" stroke-width="1"/>
<line x1="523.4" y1="148.1" x2="523.4" y2="175.8" stroke="#ee8640" stroke-width="1.1"/>
<rect x="522.2" y="163.3" width="2.4" height="11.5" fill="#463a38" stroke="#ee8640" stroke-width="1"/>
<line x1="528.5" y1="158" x2="528.5" y2="175.8" stroke="#ee8640" stroke-width="1.1"/>
<rect x="527.3" y="164.3" width="2.4" height="9.4" fill="#f9a85e" stroke="#ee8640" stroke-width="1"/>
<line x1="533.3" y1="156" x2="533.3" y2="167" stroke="#ee8640" stroke-width="1.1"/>
<rect x="532.1" y="160.7" width="2.4" height="2.6" fill="#f9a85e" stroke="#ee8640" stroke-width="1"/>
<line x1="538.3" y1="154.9" x2="538.3" y2="170.1" stroke="#ee8640" stroke-width="1.1"/>
<rect x="537.1" y="160.2" width="2.4" height="9.3" fill="#463a38" stroke="#ee8640" stroke-width="1"/>
<line x1="543.4" y1="166.9" x2="543.4" y2="191" stroke="#ee8640" stroke-width="1.1"/>
<rect x="542.2" y="169" width="2.4" height="11.5" fill="#463a38" stroke="#ee8640" stroke-width="1"/>
<line x1="548.4" y1="168" x2="548.4" y2="193.6" stroke="#ee8640" stroke-width="1.1"/>
<rect x="547.2" y="180.3" width="2.4" height="12.7" fill="#463a38" stroke="#ee8640" stroke-width="1"/>
<line x1="553.4" y1="187.3" x2="553.4" y2="213.5" stroke="#ee8640" stroke-width="1.1"/>
<rect x="552.2" y="192.5" width="2.4" height="12.1" fill="#463a38" stroke="#ee8640" stroke-width="1"/>
<line x1="558.5" y1="198.3" x2="558.5" y2="213.5" stroke="#ee8640" stroke-width="1.1"/>
<rect x="557.3" y="204.6" width="2.4" height="8.9" fill="#463a38" stroke="#ee8640" stroke-width="1"/>
<line x1="562.5" y1="198.8" x2="562.5" y2="211.9" stroke="#ee8640" stroke-width="1.1"/>
<rect x="561.3" y="200.9" width="2.4" height="9.5" fill="#f9a85e" stroke="#ee8640" stroke-width="1"/>
<line x1="567.4" y1="198.8" x2="567.4" y2="216.7" stroke="#ee8640" stroke-width="1.1"/>
<rect x="566.2" y="199.9" width="2.4" height="12" fill="#463a38" stroke="#ee8640" stroke-width="1"/>
<line x1="572.5" y1="193" x2="572.5" y2="215.6" stroke="#ee8640" stroke-width="1.1"/>
<rect x="571.3" y="196.2" width="2.4" height="14.2" fill="#f9a85e" stroke="#ee8640" stroke-width="1"/>
<line x1="577.4" y1="176.8" x2="577.4" y2="197.8" stroke="#ee8640" stroke-width="1.1"/>
<rect x="576.2" y="183" width="2.4" height="12.7" fill="#f9a85e" stroke="#ee8640" stroke-width="1"/>
<line x1="582.4" y1="160.2" x2="582.4" y2="184.8" stroke="#ee8640" stroke-width="1.1"/>
<rect x="581.2" y="163.3" width="2.4" height="18.8" fill="#f9a85e" stroke="#ee8640" stroke-width="1"/>
<line x1="587.4" y1="158" x2="587.4" y2="164.9" stroke="#ee8640" stroke-width="1.1"/>
<line x1="585.8" y1="161.2" x2="589" y2="161.2" stroke="#ee8640" stroke-width="1.2"/>
<line x1="592.5" y1="157.5" x2="592.5" y2="170.6" stroke="#ee8640" stroke-width="1.1"/>
<rect x="591.3" y="160.2" width="2.4" height="7.8" fill="#463a38" stroke="#ee8640" stroke-width="1"/>
<line x1="597.4" y1="163.9" x2="597.4" y2="173.7" stroke="#ee8640" stroke-width="1.1"/>
<rect x="596.2" y="167.6" width="2.4" height="2.2" fill="#f9a85e" stroke="#ee8640" stroke-width="1"/>
<line x1="602.5" y1="169" x2="602.5" y2="186.9" stroke="#ee8640" stroke-width="1.1"/>
<rect x="601.3" y="169.5" width="2.4" height="16.3" fill="#463a38" stroke="#ee8640" stroke-width="1"/>
<line x1="607.4" y1="170.1" x2="607.4" y2="189" stroke="#ee8640" stroke-width="1.1"/>
<rect x="606.2" y="180.2" width="2.4" height="4.8" fill="#f9a85e" stroke="#ee8640" stroke-width="1"/>
<line x1="611.4" y1="156" x2="611.4" y2="181.6" stroke="#ee8640" stroke-width="1.1"/>
<rect x="610.2" y="159.6" width="2.4" height="19.1" fill="#f9a85e" stroke="#ee8640" stroke-width="1"/>
<line x1="616.5" y1="148.1" x2="616.5" y2="159.1" stroke="#ee8640" stroke-width="1.1"/>
<rect x="615.3" y="154.9" width="2.4" height="3.1" fill="#f9a85e" stroke="#ee8640" stroke-width="1"/>
<line x1="621.5" y1="150.2" x2="621.5" y2="160.7" stroke="#ee8640" stroke-width="1.1"/>
<rect x="620.3" y="154.4" width="2.4" height="4.2" fill="#463a38" stroke="#ee8640" stroke-width="1"/>
<line x1="626.4" y1="156" x2="626.4" y2="164.9" stroke="#ee8640" stroke-width="1.1"/>
<rect x="625.2" y="158" width="2.4" height="3.2" fill="#f9a85e" stroke="#ee8640" stroke-width="1"/>
<line x1="631.5" y1="139.2" x2="631.5" y2="163.8" stroke="#ee8640" stroke-width="1.1"/>
<rect x="630.3" y="147" width="2.4" height="12.6" fill="#f9a85e" stroke="#ee8640" stroke-width="1"/>
<line x1="636.4" y1="135.5" x2="636.4" y2="152.8" stroke="#ee8640" stroke-width="1.1"/>
<rect x="635.2" y="142.8" width="2.4" height="3.2" fill="#f9a85e" stroke="#ee8640" stroke-width="1"/>
<line x1="641.4" y1="132.9" x2="641.4" y2="151.8" stroke="#ee8640" stroke-width="1.1"/>
<rect x="640.2" y="142.3" width="2.4" height="7.4" fill="#463a38" stroke="#ee8640" stroke-width="1"/>
<line x1="646.5" y1="145.5" x2="646.5" y2="153.9" stroke="#ee8640" stroke-width="1.1"/>
<line x1="644.9" y1="149.7" x2="648.1" y2="149.7" stroke="#ee8640" stroke-width="1.2"/>
<line x1="651.4" y1="146" x2="651.4" y2="152.3" stroke="#ee8640" stroke-width="1.1"/>
<line x1="649.8" y1="149.7" x2="653" y2="149.7" stroke="#ee8640" stroke-width="1.2"/>
<line x1="656.5" y1="147" x2="656.5" y2="154.9" stroke="#ee8640" stroke-width="1.1"/>
<line x1="654.9" y1="149.7" x2="658.1" y2="149.7" stroke="#ee8640" stroke-width="1.2"/>
<line x1="660.5" y1="139.2" x2="660.5" y2="155.4" stroke="#ee8640" stroke-width="1.1"/>
<rect x="659.3" y="147" width="2.4" height="2.7" fill="#f9a85e" stroke="#ee8640" stroke-width="1"/>
<line x1="665.6" y1="141.3" x2="665.6" y2="176.9" stroke="#ee8640" stroke-width="1.1"/>
<rect x="664.4" y="146" width="2.4" height="14.2" fill="#463a38" stroke="#ee8640" stroke-width="1"/>
<line x1="670.5" y1="161.2" x2="670.5" y2="178" stroke="#ee8640" stroke-width="1.1"/>
<rect x="669.3" y="161.7" width="2.4" height="4.7" fill="#463a38" stroke="#ee8640" stroke-width="1"/>
<line x1="675.6" y1="158" x2="675.6" y2="169.1" stroke="#ee8640" stroke-width="1.1"/>
<rect x="674.4" y="163.8" width="2.4" height="2.1" fill="#f9a85e" stroke="#ee8640" stroke-width="1"/>
<line x1="680.5" y1="161.7" x2="680.5" y2="170.1" stroke="#ee8640" stroke-width="1.1"/>
<rect x="679.3" y="162.8" width="2.4" height="5.2" fill="#463a38" stroke="#ee8640" stroke-width="1"/>
<line x1="685.5" y1="158" x2="685.5" y2="168" stroke="#ee8640" stroke-width="1.1"/>
<rect x="684.3" y="164.9" width="2.4" height="2.1" fill="#f9a85e" stroke="#ee8640" stroke-width="1"/>
<line x1="690.5" y1="160.2" x2="690.5" y2="175.9" stroke="#ee8640" stroke-width="1.1"/>
<rect x="689.3" y="163.3" width="2.4" height="5.2" fill="#463a38" stroke="#ee8640" stroke-width="1"/>
<line x1="695.5" y1="165.9" x2="695.5" y2="176.9" stroke="#ee8640" stroke-width="1.1"/>
<rect x="694.3" y="168" width="2.4" height="3.7" fill="#463a38" stroke="#ee8640" stroke-width="1"/>
<line x1="700.4" y1="160.2" x2="700.4" y2="175.9" stroke="#ee8640" stroke-width="1.1"/>
<rect x="699.2" y="171.2" width="2.4" height="1.5" fill="#f9a85e" stroke="#ee8640" stroke-width="1"/>
<line x1="705.5" y1="171.2" x2="705.5" y2="185.3" stroke="#ee8640" stroke-width="1.1"/>
<rect x="704.3" y="171.7" width="2.4" height="13.1" fill="#463a38" stroke="#ee8640" stroke-width="1"/>
<line x1="709.4" y1="173.3" x2="709.4" y2="183.2" stroke="#ee8640" stroke-width="1.1"/>
<rect x="708.2" y="176.9" width="2.4" height="2.7" fill="#f9a85e" stroke="#ee8640" stroke-width="1"/>
<line x1="714.4" y1="173.8" x2="714.4" y2="182.7" stroke="#ee8640" stroke-width="1.1"/>
<line x1="712.8" y1="176.6" x2="716" y2="176.6" stroke="#ee8640" stroke-width="1.2"/>
<line x1="719.3" y1="156.9" x2="719.3" y2="177.7" stroke="#ee8640" stroke-width="1.1"/>
<rect x="718.1" y="165" width="2.4" height="11.9" fill="#f9a85e" stroke="#ee8640" stroke-width="1"/>
<line x1="724.4" y1="161" x2="724.4" y2="178.8" stroke="#ee8640" stroke-width="1.1"/>
<rect x="723.2" y="164.7" width="2.4" height="7.8" fill="#463a38" stroke="#ee8640" stroke-width="1"/>
<line x1="729.4" y1="162" x2="729.4" y2="182" stroke="#ee8640" stroke-width="1.1"/>
<rect x="728.2" y="172" width="2.4" height="7.3" fill="#463a38" stroke="#ee8640" stroke-width="1"/>
<line x1="734.4" y1="176.7" x2="734.4" y2="185.1" stroke="#ee8640" stroke-width="1.1"/>
<rect x="733.2" y="177.8" width="2.4" height="3.1" fill="#463a38" stroke="#ee8640" stroke-width="1"/>
<line x1="739.3" y1="176.7" x2="739.3" y2="189.3" stroke="#ee8640" stroke-width="1.1"/>
<rect x="738.1" y="179.9" width="2.4" height="8.4" fill="#463a38" stroke="#ee8640" stroke-width="1"/>
<line x1="744.4" y1="183" x2="744.4" y2="189.8" stroke="#ee8640" stroke-width="1.1"/>
<line x1="742.8" y1="186.7" x2="746" y2="186.7" stroke="#ee8640" stroke-width="1.2"/>
<line x1="749.4" y1="179.9" x2="749.4" y2="197.7" stroke="#ee8640" stroke-width="1.1"/>
<rect x="748.2" y="187.2" width="2.4" height="10.5" fill="#463a38" stroke="#ee8640" stroke-width="1"/>
<line x1="754.3" y1="185.1" x2="754.3" y2="206.6" stroke="#ee8640" stroke-width="1.1"/>
<rect x="753.1" y="197.2" width="2.4" height="5.8" fill="#463a38" stroke="#ee8640" stroke-width="1"/>
<line x1="758.3" y1="189.8" x2="758.3" y2="205.6" stroke="#ee8640" stroke-width="1.1"/>
<rect x="757.1" y="196.7" width="2.4" height="5.2" fill="#f9a85e" stroke="#ee8640" stroke-width="1"/>
<line x1="763.3" y1="189.8" x2="763.3" y2="197.7" stroke="#ee8640" stroke-width="1.1"/>
<rect x="762.1" y="195.6" width="2.4" height="1.9" fill="#463a38" stroke="#ee8640" stroke-width="1"/>
<line x1="768.5" y1="188.3" x2="768.5" y2="197.7" stroke="#ee8640" stroke-width="1.1"/>
<rect x="767.3" y="190.9" width="2.4" height="3.7" fill="#f9a85e" stroke="#ee8640" stroke-width="1"/>
<line x1="773.4" y1="187.1" x2="773.4" y2="194.5" stroke="#ee8640" stroke-width="1.1"/>
<rect x="772.2" y="189.7" width="2.4" height="3.3" fill="#463a38" stroke="#ee8640" stroke-width="1"/>
<line x1="778.4" y1="188.2" x2="778.4" y2="206" stroke="#ee8640" stroke-width="1.1"/>
<rect x="777.2" y="192.1" width="2.4" height="6.6" fill="#463a38" stroke="#ee8640" stroke-width="1"/>
<line x1="783.4" y1="181.9" x2="783.4" y2="199.8" stroke="#ee8640" stroke-width="1.1"/>
<rect x="782.2" y="196.3" width="2.4" height="1.6" fill="#f9a85e" stroke="#ee8640" stroke-width="1"/>
<line x1="788.4" y1="193.2" x2="788.4" y2="211.7" stroke="#ee8640" stroke-width="1.1"/>
<rect x="787.2" y="194.2" width="2.4" height="17.5" fill="#463a38" stroke="#ee8640" stroke-width="1"/>
<line x1="793.3" y1="196" x2="793.3" y2="211.7" stroke="#ee8640" stroke-width="1.1"/>
<rect x="792.1" y="199.2" width="2.4" height="12" fill="#f9a85e" stroke="#ee8640" stroke-width="1"/>
<line x1="798.4" y1="196.6" x2="798.4" y2="207.6" stroke="#ee8640" stroke-width="1.1"/>
<rect x="797.2" y="197.6" width="2.4" height="8.9" fill="#463a38" stroke="#ee8640" stroke-width="1"/>
<line x1="803.4" y1="201" x2="803.4" y2="208" stroke="#ee8640" stroke-width="1.1"/>
<line x1="801.8" y1="205.4" x2="805" y2="205.4" stroke="#ee8640" stroke-width="1.2"/>
<line x1="808.4" y1="197.1" x2="808.4" y2="221.7" stroke="#ee8640" stroke-width="1.1"/>
<rect x="807.2" y="204.2" width="2.4" height="14.3" fill="#463a38" stroke="#ee8640" stroke-width="1"/>
<line x1="812.5" y1="203.2" x2="812.5" y2="224.8" stroke="#ee8640" stroke-width="1.1"/>
<rect x="811.3" y="208" width="2.4" height="9.5" fill="#f9a85e" stroke="#ee8640" stroke-width="1"/>
<line x1="817.4" y1="202.1" x2="817.4" y2="226.9" stroke="#ee8640" stroke-width="1.1"/>
<rect x="816.2" y="207" width="2.4" height="18.4" fill="#463a38" stroke="#ee8640" stroke-width="1"/>
<line x1="822.5" y1="221.2" x2="822.5" y2="230.1" stroke="#ee8640" stroke-width="1.1"/>
<line x1="820.9" y1="225.2" x2="824.1" y2="225.2" stroke="#ee8640" stroke-width="1.2"/>
<line x1="827.4" y1="221.2" x2="827.4" y2="230.6" stroke="#ee8640" stroke-width="1.1"/>
<line x1="825.8" y1="225.9" x2="829" y2="225.9" stroke="#ee8640" stroke-width="1.2"/>
<line x1="832.4" y1="219.1" x2="832.4" y2="228" stroke="#ee8640" stroke-width="1.1"/>
<rect x="831.2" y="222.7" width="2.4" height="3.2" fill="#f9a85e" stroke="#ee8640" stroke-width="1"/>
<line x1="837.5" y1="220.1" x2="837.5" y2="232.7" stroke="#ee8640" stroke-width="1.1"/>
<rect x="836.3" y="222.2" width="2.4" height="6.3" fill="#463a38" stroke="#ee8640" stroke-width="1"/>
<line x1="842.4" y1="214.9" x2="842.4" y2="238" stroke="#ee8640" stroke-width="1.1"/>
<rect x="841.2" y="220.1" width="2.4" height="7.4" fill="#f9a85e" stroke="#ee8640" stroke-width="1"/>
<line x1="847.4" y1="209.1" x2="847.4" y2="228" stroke="#ee8640" stroke-width="1.1"/>
<rect x="846.2" y="210.2" width="2.4" height="8.3" fill="#f9a85e" stroke="#ee8640" stroke-width="1"/>
<line x1="852.6" y1="192.8" x2="852.6" y2="211.7" stroke="#ee8640" stroke-width="1.1"/>
<rect x="851.4" y="196" width="2.4" height="11.5" fill="#f9a85e" stroke="#ee8640" stroke-width="1"/>
<line x1="857.4" y1="197.6" x2="857.4" y2="205.4" stroke="#ee8640" stroke-width="1.1"/>
<rect x="856.2" y="198.6" width="2.4" height="4.2" fill="#463a38" stroke="#ee8640" stroke-width="1"/>
<line x1="861.5" y1="199.1" x2="861.5" y2="204.9" stroke="#ee8640" stroke-width="1.1"/>
<line x1="866.5" y1="188.1" x2="866.5" y2="204.9" stroke="#ee8640" stroke-width="1.1"/>
<rect x="865.3" y="193.4" width="2.4" height="7.3" fill="#f9a85e" stroke="#ee8640" stroke-width="1"/>
<line x1="871.5" y1="187.1" x2="871.5" y2="195.5" stroke="#ee8640" stroke-width="1.1"/>
<rect x="870.3" y="192.3" width="2.4" height="2.6" fill="#463a38" stroke="#ee8640" stroke-width="1"/>
<line x1="12.5" y1="158.9" x2="885.5" y2="158.9" stroke="#b82024" stroke-width="1.8"/>
<line x1="12.5" y1="214.8" x2="885.5" y2="214.8" stroke="#1dba1d" stroke-width="2"/>
<polyline points="12,74.6 25,74.8 28,76.7 36,76.5 38,75.2 46,75.2 53,77 58,78.8 63,80.4 68,81.4 72,82.3 77,81.2 82,80.4 87,78.8 92,77 97,75.2 102,74.6 108,74.4 112,73.2 117,72.5 122,71.5 127,70.8 138.6,71 146,68.5 155.4,65.2 156.5,64.7 167,64.7 172,66.8 177.5,66.8 179.6,68.5 186,68.5 189,70.4 225.7,70.4 233,74.1 238.3,76.7 242,78.9 261,78.9 264,77 289,76.8 291.4,74.7 311.4,74.7 313.5,76.6 332,76.6 334,75 340,75 342.5,77 349,78.9 355,80.2 365.5,83.3 376,83.3 386.5,79.1 399,79.1 405,80.2 411.7,80.2 418,82.8 426.4,85.4 430.6,86.5 445.2,86.5 449.4,88.6 455.7,88.6 460,91.2 466.2,92.8 471.3,92.8 472.3,94.7 494.4,94.7 496.5,97.6 507,104.9 517.5,113.8 528,123.8 538.5,130.6 542.5,136.5 553,147 563.5,158.6 569.7,163.8 576,167.2 599,167.2 602,168.5 610.5,168.5 615.7,167 627.3,167 631.5,164.9 636.7,162.3 642,161.2 648.3,161.2 654.6,158.6 659.8,156.5 662,156.5 665,158.8 673.5,158.8 679.7,160.7 690.2,160.7 696.5,163.3 700.7,163.3 705,164.9 710,167 725.5,167.3 730.7,168.3 739,171 749.6,175.2 760,179.9 767.5,182.5 769.6,183 775.9,183 778,184.9 783.2,184.9 788.5,187.2 799,190.9 809.4,194.6 822.5,200.7 833,206 841.4,208.8 847.7,208.8 851.8,206.5 862.3,206.5 865.5,204.9 871,204.9" stroke="#1414b8" stroke-width="1.25" stroke-linejoin="round"/>
<polyline points="12,87 35,87 38,85.1 58,85.3 62,86.2 77,86.2 80,85.2 89,85.1 91,82.9 109,82.6 111,81.2 123,81 125,79.2 142.8,79 145,76.7 152.3,76.7 154.4,74.6 235,74.6 239,76.7 242,77 250,76.8 355,76.8 360,78.6 376,78.6 378,79.1 418,79.1 420,80.7 432.6,80.7 434.7,82.8 456.8,82.8 460,84.9 465,85 468,86.8 486,86.8 488,88.4 496.5,88.4 500.7,91.3 507,92.8 510,92.8 517.5,97.6 533.2,104.9 549,111.7 559.4,119.6 570,126.9 576,130.2 585,131.7 592.8,132.9 595,135 601,135.5 604,136.5 606,138.6 619,138.6 621,141 644,141 646,142.8 667,142.8 669,144.7 681,144.7 684,146.8 692.3,146.8 694.4,148.9 702.8,148.9 705,150.7 710,150.7 713.3,152.8 725.5,153.1 727.6,154.7 736,154.7 738,156.6 745.4,156.6 747,158.9 751,158.9 752.8,160.5 759,160.5 761,162.6 765.4,162.6 767.5,165 774.8,165 777,167.1 784.3,167.1 787.4,169.2 790.6,169.2 792.6,171 800,171 803,173.1 806.3,173.1 809.4,174.6 813.6,174.6 815.7,176.7 818.9,176.7 821,178.8 825.2,178.8 827.7,180.8 838.2,183.4 845.6,186.8 868.6,187.1 872,188.3" stroke="#c41f24" stroke-width="1.3" stroke-linejoin="round"/>
<line x1="12.5" y1="195.4" x2="885.5" y2="195.4" stroke="#e3e6ea" stroke-width="1.2"/>
</g>
<rect x="43" y="37.2" width="245" height="12.3" fill="#3c434c"/>
<text x="14" y="47.9" font-size="10.5" fill="#1414f0" stroke="#1414f0" stroke-width="0.2" textLength="134" lengthAdjust="spacingAndGlyphs">Exponential_Moving_Average</text>
<text x="152.5" y="47.9" font-size="10.5" fill="#ee161e" stroke="#ee161e" stroke-width="0.2" textLength="134.5" lengthAdjust="spacingAndGlyphs">Exponential_Moving_Average</text>
<rect x="12" y="36" width="31" height="22" fill="#f0f0f0"/>
<rect x="12" y="36" width="31" height="4.5" fill="#d2d2d2"/>
<rect x="16.3" y="44.2" width="9.5" height="9.5" rx="2" fill="url(#rsq)" stroke="#b01218" stroke-width="0.6"/>
<rect x="29.3" y="44.2" width="9.5" height="9.5" rx="2" fill="url(#bsq)" stroke="#0f6aa0" stroke-width="0.6"/>
<g id="macd" fill="none">
<line x1="12.5" y1="275.3" x2="885.5" y2="275.3" stroke="#b04048" stroke-width="1" stroke-dasharray="3 3" opacity="0.55"/>
<line x1="16.5" y1="275.3" x2="16.5" y2="277" stroke="#b82026" stroke-width="1.8" opacity="0.9"/>
<line x1="21.5" y1="275.3" x2="21.5" y2="277" stroke="#b82026" stroke-width="1.8" opacity="0.9"/>
<line x1="26.5" y1="275.3" x2="26.5" y2="277" stroke="#b82026" stroke-width="1.8" opacity="0.9"/>
<line x1="31.5" y1="275.3" x2="31.5" y2="277" stroke="#b82026" stroke-width="1.8" opacity="0.9"/>
<line x1="170.8" y1="275.3" x2="170.8" y2="276.5" stroke="#b82026" stroke-width="1.8" opacity="0.9"/>
<line x1="175.8" y1="275.3" x2="175.8" y2="277" stroke="#b82026" stroke-width="1.8" opacity="0.9"/>
<line x1="180.9" y1="275.3" x2="180.9" y2="277.5" stroke="#b82026" stroke-width="1.8" opacity="0.9"/>
<line x1="185.9" y1="275.3" x2="185.9" y2="278" stroke="#b82026" stroke-width="1.8" opacity="0.9"/>
<line x1="191.1" y1="275.3" x2="191.1" y2="278.8" stroke="#b82026" stroke-width="1.8" opacity="0.9"/>
<line x1="196.1" y1="275.3" x2="196.1" y2="278.4" stroke="#b82026" stroke-width="1.8" opacity="0.9"/>
<line x1="200.9" y1="275.3" x2="200.9" y2="277" stroke="#b82026" stroke-width="1.8" opacity="0.9"/>
<line x1="229.8" y1="275.3" x2="229.8" y2="276.5" stroke="#b82026" stroke-width="1.8" opacity="0.9"/>
<line x1="234.8" y1="275.3" x2="234.8" y2="277.5" stroke="#b82026" stroke-width="1.8" opacity="0.9"/>
<line x1="239.8" y1="275.3" x2="239.8" y2="278.5" stroke="#b82026" stroke-width="1.8" opacity="0.9"/>
<line x1="244.7" y1="275.3" x2="244.7" y2="279" stroke="#b82026" stroke-width="1.8" opacity="0.9"/>
<line x1="249.7" y1="275.3" x2="249.7" y2="278.5" stroke="#b82026" stroke-width="1.8" opacity="0.9"/>
<line x1="254.7" y1="275.3" x2="254.7" y2="276.5" stroke="#b82026" stroke-width="1.8" opacity="0.9"/>
<line x1="357.5" y1="275.3" x2="357.5" y2="276.8" stroke="#b82026" stroke-width="1.8" opacity="0.9"/>
<line x1="361.7" y1="275.3" x2="361.7" y2="277.5" stroke="#b82026" stroke-width="1.8" opacity="0.9"/>
<line x1="366.9" y1="275.3" x2="366.9" y2="278" stroke="#b82026" stroke-width="1.8" opacity="0.9"/>
<line x1="371.6" y1="275.3" x2="371.6" y2="277" stroke="#b82026" stroke-width="1.8" opacity="0.9"/>
<line x1="420.8" y1="275.3" x2="420.8" y2="276.5" stroke="#b82026" stroke-width="1.8" opacity="0.9"/>
<line x1="425.9" y1="275.3" x2="425.9" y2="277.5" stroke="#b82026" stroke-width="1.8" opacity="0.9"/>
<line x1="430.9" y1="275.3" x2="430.9" y2="277.5" stroke="#b82026" stroke-width="1.8" opacity="0.9"/>
<line x1="435.9" y1="275.3" x2="435.9" y2="277" stroke="#b82026" stroke-width="1.8" opacity="0.9"/>
<line x1="455.9" y1="275.3" x2="455.9" y2="277" stroke="#b82026" stroke-width="1.8" opacity="0.9"/>
<line x1="461.1" y1="275.3" x2="461.1" y2="277.5" stroke="#b82026" stroke-width="1.8" opacity="0.9"/>
<line x1="465.3" y1="275.3" x2="465.3" y2="277" stroke="#b82026" stroke-width="1.8" opacity="0.9"/>
<line x1="504.7" y1="275.3" x2="504.7" y2="281.1" stroke="#b82026" stroke-width="1.8" opacity="0.9"/>
<line x1="509.5" y1="275.3" x2="509.5" y2="281.1" stroke="#b82026" stroke-width="1.8" opacity="0.9"/>
<line x1="514.2" y1="275.3" x2="514.2" y2="281.9" stroke="#b82026" stroke-width="1.8" opacity="0.9"/>
<line x1="519.2" y1="275.3" x2="519.2" y2="284.2" stroke="#b82026" stroke-width="1.8" opacity="0.9"/>
<line x1="523.9" y1="275.3" x2="523.9" y2="285" stroke="#b82026" stroke-width="1.8" opacity="0.9"/>
<line x1="529" y1="275.3" x2="529" y2="285" stroke="#b82026" stroke-width="1.8" opacity="0.9"/>
<line x1="533.75" y1="275.3" x2="533.75" y2="283.4" stroke="#b82026" stroke-width="1.8" opacity="0.9"/>
<line x1="538.75" y1="275.3" x2="538.75" y2="281.9" stroke="#b82026" stroke-width="1.8" opacity="0.9"/>
<line x1="543.75" y1="275.3" x2="543.75" y2="283.4" stroke="#b82026" stroke-width="1.8" opacity="0.9"/>
<line x1="548.9" y1="275.3" x2="548.9" y2="283.4" stroke="#b82026" stroke-width="1.8" opacity="0.9"/>
<line x1="553.9" y1="275.3" x2="553.9" y2="284.2" stroke="#b82026" stroke-width="1.8" opacity="0.9"/>
<line x1="558.75" y1="275.3" x2="558.75" y2="285" stroke="#b82026" stroke-width="1.8" opacity="0.9"/>
<line x1="563" y1="275.3" x2="563" y2="282.6" stroke="#b82026" stroke-width="1.8" opacity="0.9"/>
<line x1="568" y1="275.3" x2="568" y2="281.1" stroke="#b82026" stroke-width="1.8" opacity="0.9"/>
<line x1="572.8" y1="275.3" x2="572.8" y2="279.5" stroke="#b82026" stroke-width="1.8" opacity="0.9"/>
<line x1="577.8" y1="275.3" x2="577.8" y2="276" stroke="#b82026" stroke-width="1.8" opacity="0.9"/>
<line x1="582.8" y1="275.3" x2="582.8" y2="273.3" stroke="#b82026" stroke-width="1.8" opacity="0.9"/>
<line x1="588" y1="275.3" x2="588" y2="268.6" stroke="#b82026" stroke-width="1.8" opacity="0.9"/>
<line x1="593" y1="275.3" x2="593" y2="267.8" stroke="#b82026" stroke-width="1.8" opacity="0.9"/>
<line x1="597.8" y1="275.3" x2="597.8" y2="267.8" stroke="#b82026" stroke-width="1.8" opacity="0.9"/>
<line x1="602.8" y1="275.3" x2="602.8" y2="269.4" stroke="#b82026" stroke-width="1.8" opacity="0.9"/>
<line x1="607.8" y1="275.3" x2="607.8" y2="268.6" stroke="#b82026" stroke-width="1.8" opacity="0.9"/>
<line x1="611.9" y1="275.3" x2="611.9" y2="268.6" stroke="#b82026" stroke-width="1.8" opacity="0.9"/>
<line x1="616.9" y1="275.3" x2="616.9" y2="266.3" stroke="#b82026" stroke-width="1.8" opacity="0.9"/>
<line x1="621.9" y1="275.3" x2="621.9" y2="266.3" stroke="#b82026" stroke-width="1.8" opacity="0.9"/>
<line x1="627" y1="275.3" x2="627" y2="266.3" stroke="#b82026" stroke-width="1.8" opacity="0.9"/>
<line x1="632" y1="275.3" x2="632" y2="266.3" stroke="#b82026" stroke-width="1.8" opacity="0.9"/>
<line x1="636.9" y1="275.3" x2="636.9" y2="266.3" stroke="#b82026" stroke-width="1.8" opacity="0.9"/>
<line x1="641.9" y1="275.3" x2="641.9" y2="266.3" stroke="#b82026" stroke-width="1.8" opacity="0.9"/>
<line x1="646.9" y1="275.3" x2="646.9" y2="267.5" stroke="#b82026" stroke-width="1.8" opacity="0.9"/>
<line x1="651.6" y1="275.3" x2="651.6" y2="267.8" stroke="#b82026" stroke-width="1.8" opacity="0.9"/>
<line x1="656.7" y1="275.3" x2="656.7" y2="269.4" stroke="#b82026" stroke-width="1.8" opacity="0.9"/>
<line x1="661.1" y1="275.3" x2="661.1" y2="270.2" stroke="#b82026" stroke-width="1.8" opacity="0.9"/>
<line x1="666.1" y1="275.3" x2="666.1" y2="273.5" stroke="#b82026" stroke-width="1.8" opacity="0.9"/>
<line x1="700.8" y1="275.3" x2="700.8" y2="277.5" stroke="#b82026" stroke-width="1.8" opacity="0.9"/>
<line x1="705.9" y1="275.3" x2="705.9" y2="278" stroke="#b82026" stroke-width="1.8" opacity="0.9"/>
<line x1="709.8" y1="275.3" x2="709.8" y2="278" stroke="#b82026" stroke-width="1.8" opacity="0.9"/>
<line x1="715" y1="275.3" x2="715" y2="277" stroke="#b82026" stroke-width="1.8" opacity="0.9"/>
<line x1="748" y1="275.3" x2="748" y2="277" stroke="#b82026" stroke-width="1.8" opacity="0.9"/>
<line x1="753" y1="275.3" x2="753" y2="277.5" stroke="#b82026" stroke-width="1.8" opacity="0.9"/>
<line x1="758" y1="275.3" x2="758" y2="277" stroke="#b82026" stroke-width="1.8" opacity="0.9"/>
<line x1="809" y1="275.3" x2="809" y2="277.3" stroke="#b82026" stroke-width="1.8" opacity="0.9"/>
<line x1="813" y1="275.3" x2="813" y2="277" stroke="#b82026" stroke-width="1.8" opacity="0.9"/>
<line x1="823.1" y1="275.3" x2="823.1" y2="277.5" stroke="#b82026" stroke-width="1.8" opacity="0.9"/>
<line x1="827.6" y1="275.3" x2="827.6" y2="277.5" stroke="#b82026" stroke-width="1.8" opacity="0.9"/>
<line x1="832.9" y1="275.3" x2="832.9" y2="277.3" stroke="#b82026" stroke-width="1.8" opacity="0.9"/>
<line x1="837.9" y1="275.3" x2="837.9" y2="277" stroke="#b82026" stroke-width="1.8" opacity="0.9"/>
<line x1="852.7" y1="275.3" x2="852.7" y2="272" stroke="#b82026" stroke-width="1.8" opacity="0.9"/>
<line x1="857.7" y1="275.3" x2="857.7" y2="270" stroke="#b82026" stroke-width="1.8" opacity="0.9"/>
<line x1="862" y1="275.3" x2="862" y2="270" stroke="#b82026" stroke-width="1.8" opacity="0.9"/>
<line x1="867" y1="275.3" x2="867" y2="270" stroke="#b82026" stroke-width="1.8" opacity="0.9"/>
<line x1="872" y1="275.3" x2="872" y2="270" stroke="#b82026" stroke-width="1.8" opacity="0.9"/>
<polyline points="13,273 30,273.5 43.8,273.7 52.2,275.3 61.7,279 72.2,281.3 78.5,279 86.8,274.8 94.2,271.1 102.6,269 107.8,271.1 120.4,269.5 128,270.2 141.9,268.6 151.25,267.8 156.7,265 162.2,267 170,270.9 182.5,274.8 190.3,278 195,277.5 201.25,276.1 216.9,276.1 223.1,275.6 232.5,280.3 243.4,285 248.1,285 255.9,281.9 263.75,279 276.25,278.75 284,275.6 291.9,274 299.7,274.4 334,275.3 338.75,274 345,276.4 357.5,280.3 366.1,283.4 373.1,281.1 382.5,277.5 388.75,274.4 404.4,274.4 410.6,277.5 424.7,282.2 448.1,282.2 459,284.7 470,285 479.4,284.7 485.6,282.7 493.4,281.6 499.7,286.6 505.2,290.5 510.6,292.3 516.9,296.7 523.9,303 532.5,305.3 538.75,306.1 548.1,310.8 559,317.3 563.75,317.5 567.7,318.6 576.25,315.5 585.6,305.3 591.9,299.8 598.1,297.2 605.9,296.7 613.75,290.5 620,287.3 629.4,283.1 638.75,277.2 646.4,274.8 652.1,273.4 656,272.2 660.7,271.9 665.5,273.4 671.2,275.4 685.6,276.7 696.6,279.5 705.9,282.7 715.3,283.4 721.6,281.9 729.4,282.2 738.75,284.2 748.1,287.3 757.5,289.4 770,289.4 784,288.6 788.75,290.5 801.25,290.5 813.75,291.4 820,293.1 827.1,294.6 833,294.6 837.1,295.3 843.2,294.1 850.2,289.6 860.2,284.4 870.7,279" stroke="#0e0e6a" stroke-width="1.2" stroke-linejoin="round"/>
<circle cx="48.5" cy="272.7" r="1.75" fill="#e62026" stroke="#8e1c24" stroke-width="0.5"/>
<circle cx="53.8" cy="274" r="1.75" fill="#e62026" stroke="#8e1c24" stroke-width="0.5"/>
<circle cx="58.8" cy="274.6" r="1.75" fill="#e62026" stroke="#8e1c24" stroke-width="0.5"/>
<circle cx="63.8" cy="275.3" r="1.75" fill="#e62026" stroke="#8e1c24" stroke-width="0.5"/>
<circle cx="67.9" cy="275.8" r="1.75" fill="#e62026" stroke="#8e1c24" stroke-width="0.5"/>
<circle cx="73" cy="276.7" r="1.75" fill="#e62026" stroke="#8e1c24" stroke-width="0.5"/>
<circle cx="77.9" cy="276.9" r="1.75" fill="#e62026" stroke="#8e1c24" stroke-width="0.5"/>
<circle cx="83" cy="276.7" r="1.75" fill="#e62026" stroke="#8e1c24" stroke-width="0.5"/>
<circle cx="87.9" cy="276.4" r="1.75" fill="#e62026" stroke="#8e1c24" stroke-width="0.5"/>
<circle cx="92.9" cy="275.3" r="1.75" fill="#e62026" stroke="#8e1c24" stroke-width="0.5"/>
<circle cx="97.9" cy="274.5" r="1.75" fill="#e62026" stroke="#8e1c24" stroke-width="0.5"/>
<circle cx="103.1" cy="274" r="1.75" fill="#e62026" stroke="#8e1c24" stroke-width="0.5"/>
<circle cx="108.4" cy="273.5" r="1.75" fill="#e62026" stroke="#8e1c24" stroke-width="0.5"/>
<circle cx="113" cy="273.2" r="1.75" fill="#e62026" stroke="#8e1c24" stroke-width="0.5"/>
<circle cx="117.3" cy="271.6" r="1.75" fill="#e62026" stroke="#8e1c24" stroke-width="0.5"/>
<circle cx="121.6" cy="270.5" r="1.75" fill="#e62026" stroke="#8e1c24" stroke-width="0.5"/>
<circle cx="126.6" cy="270.6" r="1.75" fill="#e62026" stroke="#8e1c24" stroke-width="0.5"/>
<circle cx="131.7" cy="270.6" r="1.75" fill="#e62026" stroke="#8e1c24" stroke-width="0.5"/>
<circle cx="136.7" cy="270.6" r="1.75" fill="#e62026" stroke="#8e1c24" stroke-width="0.5"/>
<circle cx="141.9" cy="269.7" r="1.75" fill="#e62026" stroke="#8e1c24" stroke-width="0.5"/>
<circle cx="146.9" cy="269.4" r="1.75" fill="#e62026" stroke="#8e1c24" stroke-width="0.5"/>
<circle cx="151.7" cy="268.6" r="1.75" fill="#e62026" stroke="#8e1c24" stroke-width="0.5"/>
<circle cx="156.7" cy="267.5" r="1.75" fill="#e62026" stroke="#8e1c24" stroke-width="0.5"/>
<circle cx="161.4" cy="267.3" r="1.75" fill="#e62026" stroke="#8e1c24" stroke-width="0.5"/>
<circle cx="165.6" cy="267.5" r="1.75" fill="#e62026" stroke="#8e1c24" stroke-width="0.5"/>
<circle cx="170.8" cy="268.3" r="1.75" fill="#e62026" stroke="#8e1c24" stroke-width="0.5"/>
<circle cx="175.8" cy="268.75" r="1.75" fill="#e62026" stroke="#8e1c24" stroke-width="0.5"/>
<circle cx="180.9" cy="269.7" r="1.75" fill="#e62026" stroke="#8e1c24" stroke-width="0.5"/>
<circle cx="185.9" cy="270.5" r="1.75" fill="#e62026" stroke="#8e1c24" stroke-width="0.5"/>
<circle cx="191.1" cy="271.4" r="1.75" fill="#e62026" stroke="#8e1c24" stroke-width="0.5"/>
<circle cx="196.1" cy="272.5" r="1.75" fill="#e62026" stroke="#8e1c24" stroke-width="0.5"/>
<circle cx="200.9" cy="273.75" r="1.75" fill="#e62026" stroke="#8e1c24" stroke-width="0.5"/>
<circle cx="205.6" cy="274" r="1.75" fill="#e62026" stroke="#8e1c24" stroke-width="0.5"/>
<circle cx="210.6" cy="274.5" r="1.75" fill="#e62026" stroke="#8e1c24" stroke-width="0.5"/>
<circle cx="215.3" cy="274.8" r="1.75" fill="#e62026" stroke="#8e1c24" stroke-width="0.5"/>
<circle cx="220" cy="274.8" r="1.75" fill="#e62026" stroke="#8e1c24" stroke-width="0.5"/>
<circle cx="225" cy="274.8" r="1.75" fill="#e62026" stroke="#8e1c24" stroke-width="0.5"/>
<circle cx="229.8" cy="275.6" r="1.75" fill="#e62026" stroke="#8e1c24" stroke-width="0.5"/>
<circle cx="234.8" cy="276.4" r="1.75" fill="#e62026" stroke="#8e1c24" stroke-width="0.5"/>
<circle cx="239.8" cy="277.2" r="1.75" fill="#e62026" stroke="#8e1c24" stroke-width="0.5"/>
<circle cx="244.7" cy="278.4" r="1.75" fill="#e62026" stroke="#8e1c24" stroke-width="0.5"/>
<circle cx="249.7" cy="279.2" r="1.75" fill="#e62026" stroke="#8e1c24" stroke-width="0.5"/>
<circle cx="254.7" cy="280.3" r="1.75" fill="#e62026" stroke="#8e1c24" stroke-width="0.5"/>
<circle cx="259.5" cy="280.3" r="1.75" fill="#e62026" stroke="#8e1c24" stroke-width="0.5"/>
<circle cx="263.75" cy="279.5" r="1.75" fill="#e62026" stroke="#8e1c24" stroke-width="0.5"/>
<circle cx="268.9" cy="279.5" r="1.75" fill="#e62026" stroke="#8e1c24" stroke-width="0.5"/>
<circle cx="273.9" cy="278.75" r="1.75" fill="#e62026" stroke="#8e1c24" stroke-width="0.5"/>
<circle cx="278.9" cy="278.4" r="1.75" fill="#e62026" stroke="#8e1c24" stroke-width="0.5"/>
<circle cx="283.75" cy="276.9" r="1.75" fill="#e62026" stroke="#8e1c24" stroke-width="0.5"/>
<circle cx="288.75" cy="276.7" r="1.75" fill="#e62026" stroke="#8e1c24" stroke-width="0.5"/>
<circle cx="293.75" cy="275.6" r="1.75" fill="#e62026" stroke="#8e1c24" stroke-width="0.5"/>
<circle cx="298.9" cy="275.3" r="1.75" fill="#e62026" stroke="#8e1c24" stroke-width="0.5"/>
<circle cx="303.8" cy="275.3" r="1.75" fill="#e62026" stroke="#8e1c24" stroke-width="0.5"/>
<circle cx="308.8" cy="275.3" r="1.75" fill="#e62026" stroke="#8e1c24" stroke-width="0.5"/>
<circle cx="313.6" cy="275.3" r="1.75" fill="#e62026" stroke="#8e1c24" stroke-width="0.5"/>
<circle cx="318.5" cy="275.3" r="1.75" fill="#e62026" stroke="#8e1c24" stroke-width="0.5"/>
<circle cx="323.4" cy="275.3" r="1.75" fill="#e62026" stroke="#8e1c24" stroke-width="0.5"/>
<circle cx="328.3" cy="275.3" r="1.75" fill="#e62026" stroke="#8e1c24" stroke-width="0.5"/>
<circle cx="333.3" cy="275.3" r="1.75" fill="#e62026" stroke="#8e1c24" stroke-width="0.5"/>
<circle cx="338" cy="274.4" r="1.75" fill="#e62026" stroke="#8e1c24" stroke-width="0.5"/>
<circle cx="342.7" cy="274.5" r="1.75" fill="#e62026" stroke="#8e1c24" stroke-width="0.5"/>
<circle cx="347.7" cy="275.3" r="1.75" fill="#e62026" stroke="#8e1c24" stroke-width="0.5"/>
<circle cx="352.8" cy="275.6" r="1.75" fill="#e62026" stroke="#8e1c24" stroke-width="0.5"/>
<circle cx="357.5" cy="276.7" r="1.75" fill="#e62026" stroke="#8e1c24" stroke-width="0.5"/>
<circle cx="361.7" cy="277.2" r="1.75" fill="#e62026" stroke="#8e1c24" stroke-width="0.5"/>
<circle cx="366.9" cy="278.4" r="1.75" fill="#e62026" stroke="#8e1c24" stroke-width="0.5"/>
<circle cx="371.6" cy="278.4" r="1.75" fill="#e62026" stroke="#8e1c24" stroke-width="0.5"/>
<circle cx="377" cy="278.75" r="1.75" fill="#e62026" stroke="#8e1c24" stroke-width="0.5"/>
<circle cx="381.7" cy="278.4" r="1.75" fill="#e62026" stroke="#8e1c24" stroke-width="0.5"/>
<circle cx="386.7" cy="277.5" r="1.75" fill="#e62026" stroke="#8e1c24" stroke-width="0.5"/>
<circle cx="391.9" cy="276.4" r="1.75" fill="#e62026" stroke="#8e1c24" stroke-width="0.5"/>
<circle cx="396.9" cy="276.1" r="1.75" fill="#e62026" stroke="#8e1c24" stroke-width="0.5"/>
<circle cx="402" cy="275.3" r="1.75" fill="#e62026" stroke="#8e1c24" stroke-width="0.5"/>
<circle cx="406.7" cy="275.3" r="1.75" fill="#e62026" stroke="#8e1c24" stroke-width="0.5"/>
<circle cx="411.7" cy="275.6" r="1.75" fill="#e62026" stroke="#8e1c24" stroke-width="0.5"/>
<circle cx="415.8" cy="276.1" r="1.75" fill="#e62026" stroke="#8e1c24" stroke-width="0.5"/>
<circle cx="420.8" cy="276.4" r="1.75" fill="#e62026" stroke="#8e1c24" stroke-width="0.5"/>
<circle cx="425.9" cy="277.2" r="1.75" fill="#e62026" stroke="#8e1c24" stroke-width="0.5"/>
<circle cx="430.9" cy="278.3" r="1.75" fill="#e62026" stroke="#8e1c24" stroke-width="0.5"/>
<circle cx="435.9" cy="279.2" r="1.75" fill="#e62026" stroke="#8e1c24" stroke-width="0.5"/>
<circle cx="441.1" cy="279.5" r="1.75" fill="#e62026" stroke="#8e1c24" stroke-width="0.5"/>
<circle cx="446.1" cy="279.5" r="1.75" fill="#e62026" stroke="#8e1c24" stroke-width="0.5"/>
<circle cx="450.9" cy="280.3" r="1.75" fill="#e62026" stroke="#8e1c24" stroke-width="0.5"/>
<circle cx="455.9" cy="280.3" r="1.75" fill="#e62026" stroke="#8e1c24" stroke-width="0.5"/>
<circle cx="461.1" cy="280.3" r="1.75" fill="#e62026" stroke="#8e1c24" stroke-width="0.5"/>
<circle cx="465.3" cy="281.4" r="1.75" fill="#e62026" stroke="#8e1c24" stroke-width="0.5"/>
<circle cx="470" cy="282.5" r="1.75" fill="#e62026" stroke="#8e1c24" stroke-width="0.5"/>
<circle cx="475" cy="282.7" r="1.75" fill="#e62026" stroke="#8e1c24" stroke-width="0.5"/>
<circle cx="480.2" cy="282.7" r="1.75" fill="#e62026" stroke="#8e1c24" stroke-width="0.5"/>
<circle cx="485.2" cy="282.7" r="1.75" fill="#e62026" stroke="#8e1c24" stroke-width="0.5"/>
<circle cx="490" cy="282.7" r="1.75" fill="#e62026" stroke="#8e1c24" stroke-width="0.5"/>
<circle cx="495" cy="282.7" r="1.75" fill="#e62026" stroke="#8e1c24" stroke-width="0.5"/>
<circle cx="499.7" cy="282.7" r="1.75" fill="#e62026" stroke="#8e1c24" stroke-width="0.5"/>
<circle cx="504.7" cy="284.5" r="1.75" fill="#e62026" stroke="#8e1c24" stroke-width="0.5"/>
<circle cx="509.5" cy="285.5" r="1.75" fill="#e62026" stroke="#8e1c24" stroke-width="0.5"/>
<circle cx="514.2" cy="287.3" r="1.75" fill="#e62026" stroke="#8e1c24" stroke-width="0.5"/>
<circle cx="519.2" cy="289.4" r="1.75" fill="#e62026" stroke="#8e1c24" stroke-width="0.5"/>
<circle cx="523.9" cy="291.25" r="1.75" fill="#e62026" stroke="#8e1c24" stroke-width="0.5"/>
<circle cx="529" cy="294.4" r="1.75" fill="#e62026" stroke="#8e1c24" stroke-width="0.5"/>
<circle cx="533.75" cy="296.4" r="1.75" fill="#e62026" stroke="#8e1c24" stroke-width="0.5"/>
<circle cx="538.75" cy="298.3" r="1.75" fill="#e62026" stroke="#8e1c24" stroke-width="0.5"/>
<circle cx="543.75" cy="299.4" r="1.75" fill="#e62026" stroke="#8e1c24" stroke-width="0.5"/>
<circle cx="548.9" cy="302.2" r="1.75" fill="#e62026" stroke="#8e1c24" stroke-width="0.5"/>
<circle cx="553.9" cy="304.2" r="1.75" fill="#e62026" stroke="#8e1c24" stroke-width="0.5"/>
<circle cx="558.75" cy="306.4" r="1.75" fill="#e62026" stroke="#8e1c24" stroke-width="0.5"/>
<circle cx="563" cy="308.4" r="1.75" fill="#e62026" stroke="#8e1c24" stroke-width="0.5"/>
<circle cx="568" cy="310.3" r="1.75" fill="#e62026" stroke="#8e1c24" stroke-width="0.5"/>
<circle cx="572.8" cy="311.25" r="1.75" fill="#e62026" stroke="#8e1c24" stroke-width="0.5"/>
<circle cx="577.8" cy="311.25" r="1.75" fill="#e62026" stroke="#8e1c24" stroke-width="0.5"/>
<circle cx="582.8" cy="311.25" r="1.75" fill="#e62026" stroke="#8e1c24" stroke-width="0.5"/>
<circle cx="588" cy="309.5" r="1.75" fill="#e62026" stroke="#8e1c24" stroke-width="0.5"/>
<circle cx="593" cy="307.3" r="1.75" fill="#e62026" stroke="#8e1c24" stroke-width="0.5"/>
<circle cx="597.8" cy="305.6" r="1.75" fill="#e62026" stroke="#8e1c24" stroke-width="0.5"/>
<circle cx="602.8" cy="303.4" r="1.75" fill="#e62026" stroke="#8e1c24" stroke-width="0.5"/>
<circle cx="607.8" cy="301.4" r="1.75" fill="#e62026" stroke="#8e1c24" stroke-width="0.5"/>
<circle cx="611.9" cy="299.4" r="1.75" fill="#e62026" stroke="#8e1c24" stroke-width="0.5"/>
<circle cx="616.9" cy="297.5" r="1.75" fill="#e62026" stroke="#8e1c24" stroke-width="0.5"/>
<circle cx="621.9" cy="294.4" r="1.75" fill="#e62026" stroke="#8e1c24" stroke-width="0.5"/>
<circle cx="627" cy="292.3" r="1.75" fill="#e62026" stroke="#8e1c24" stroke-width="0.5"/>
<circle cx="632" cy="290.5" r="1.75" fill="#e62026" stroke="#8e1c24" stroke-width="0.5"/>
<circle cx="636.9" cy="287.7" r="1.75" fill="#e62026" stroke="#8e1c24" stroke-width="0.5"/>
<circle cx="641.9" cy="285.5" r="1.75" fill="#e62026" stroke="#8e1c24" stroke-width="0.5"/>
<circle cx="646.9" cy="282.7" r="1.75" fill="#e62026" stroke="#8e1c24" stroke-width="0.5"/>
<circle cx="651.6" cy="280.3" r="1.75" fill="#e62026" stroke="#8e1c24" stroke-width="0.5"/>
<circle cx="656.7" cy="279.2" r="1.75" fill="#e62026" stroke="#8e1c24" stroke-width="0.5"/>
<circle cx="661.1" cy="277.5" r="1.75" fill="#e62026" stroke="#8e1c24" stroke-width="0.5"/>
<circle cx="666.1" cy="276.4" r="1.75" fill="#e62026" stroke="#8e1c24" stroke-width="0.5"/>
<circle cx="670.8" cy="276.1" r="1.75" fill="#e62026" stroke="#8e1c24" stroke-width="0.5"/>
<circle cx="675.8" cy="276.1" r="1.75" fill="#e62026" stroke="#8e1c24" stroke-width="0.5"/>
<circle cx="680.9" cy="276.1" r="1.75" fill="#e62026" stroke="#8e1c24" stroke-width="0.5"/>
<circle cx="685.9" cy="276.1" r="1.75" fill="#e62026" stroke="#8e1c24" stroke-width="0.5"/>
<circle cx="691.1" cy="276.1" r="1.75" fill="#e62026" stroke="#8e1c24" stroke-width="0.5"/>
<circle cx="695.8" cy="276.1" r="1.75" fill="#e62026" stroke="#8e1c24" stroke-width="0.5"/>
<circle cx="700.8" cy="276.7" r="1.75" fill="#e62026" stroke="#8e1c24" stroke-width="0.5"/>
<circle cx="705.9" cy="278.4" r="1.75" fill="#e62026" stroke="#8e1c24" stroke-width="0.5"/>
<circle cx="709.8" cy="278.4" r="1.75" fill="#e62026" stroke="#8e1c24" stroke-width="0.5"/>
<circle cx="715" cy="279.2" r="1.75" fill="#e62026" stroke="#8e1c24" stroke-width="0.5"/>
<circle cx="720" cy="279.5" r="1.75" fill="#e62026" stroke="#8e1c24" stroke-width="0.5"/>
<circle cx="725" cy="280" r="1.75" fill="#e62026" stroke="#8e1c24" stroke-width="0.5"/>
<circle cx="730.2" cy="280.3" r="1.75" fill="#e62026" stroke="#8e1c24" stroke-width="0.5"/>
<circle cx="735.2" cy="280.3" r="1.75" fill="#e62026" stroke="#8e1c24" stroke-width="0.5"/>
<circle cx="740" cy="281.1" r="1.75" fill="#e62026" stroke="#8e1c24" stroke-width="0.5"/>
<circle cx="745" cy="281.4" r="1.75" fill="#e62026" stroke="#8e1c24" stroke-width="0.5"/>
<circle cx="750" cy="282.7" r="1.75" fill="#e62026" stroke="#8e1c24" stroke-width="0.5"/>
<circle cx="755.2" cy="283.4" r="1.75" fill="#e62026" stroke="#8e1c24" stroke-width="0.5"/>
<circle cx="759.1" cy="284.5" r="1.75" fill="#e62026" stroke="#8e1c24" stroke-width="0.5"/>
<circle cx="764.1" cy="285.3" r="1.75" fill="#e62026" stroke="#8e1c24" stroke-width="0.5"/>
<circle cx="769.2" cy="286.6" r="1.75" fill="#e62026" stroke="#8e1c24" stroke-width="0.5"/>
<circle cx="773.9" cy="286.6" r="1.75" fill="#e62026" stroke="#8e1c24" stroke-width="0.5"/>
<circle cx="778.9" cy="286.6" r="1.75" fill="#e62026" stroke="#8e1c24" stroke-width="0.5"/>
<circle cx="783.75" cy="286.6" r="1.75" fill="#e62026" stroke="#8e1c24" stroke-width="0.5"/>
<circle cx="788.75" cy="287.7" r="1.75" fill="#e62026" stroke="#8e1c24" stroke-width="0.5"/>
<circle cx="793.8" cy="287.4" r="1.75" fill="#e62026" stroke="#8e1c24" stroke-width="0.5"/>
<circle cx="798.8" cy="287.5" r="1.75" fill="#e62026" stroke="#8e1c24" stroke-width="0.5"/>
<circle cx="803.8" cy="288.4" r="1.75" fill="#e62026" stroke="#8e1c24" stroke-width="0.5"/>
<circle cx="809" cy="288.4" r="1.75" fill="#e62026" stroke="#8e1c24" stroke-width="0.5"/>
<circle cx="813" cy="288.4" r="1.75" fill="#e62026" stroke="#8e1c24" stroke-width="0.5"/>
<circle cx="817.9" cy="289.4" r="1.75" fill="#e62026" stroke="#8e1c24" stroke-width="0.5"/>
<circle cx="823.1" cy="290.3" r="1.75" fill="#e62026" stroke="#8e1c24" stroke-width="0.5"/>
<circle cx="827.6" cy="290.3" r="1.75" fill="#e62026" stroke="#8e1c24" stroke-width="0.5"/>
<circle cx="832.9" cy="291.4" r="1.75" fill="#e62026" stroke="#8e1c24" stroke-width="0.5"/>
<circle cx="837.9" cy="291.4" r="1.75" fill="#e62026" stroke="#8e1c24" stroke-width="0.5"/>
<circle cx="843" cy="292.4" r="1.75" fill="#e62026" stroke="#8e1c24" stroke-width="0.5"/>
<circle cx="847.7" cy="291.4" r="1.75" fill="#e62026" stroke="#8e1c24" stroke-width="0.5"/>
<circle cx="852.7" cy="290.4" r="1.75" fill="#e62026" stroke="#8e1c24" stroke-width="0.5"/>
<circle cx="857.7" cy="289.4" r="1.75" fill="#e62026" stroke="#8e1c24" stroke-width="0.5"/>
<circle cx="862" cy="288.6" r="1.75" fill="#e62026" stroke="#8e1c24" stroke-width="0.5"/>
<circle cx="867" cy="286.6" r="1.75" fill="#e62026" stroke="#8e1c24" stroke-width="0.5"/>
<circle cx="872" cy="285.4" r="1.75" fill="#e62026" stroke="#8e1c24" stroke-width="0.5"/>
</g>
<rect x="13.2" y="263.2" width="30.3" height="13.2" fill="#3c434c"/>
<text x="14.3" y="274.3" font-size="11" fill="#15158a" textLength="28.5" lengthAdjust="spacingAndGlyphs">MACD</text>
<g id="rsi" fill="none">
<polygon points="12.5,383.2 12.5,346.7 18.3,361.2 23.75,361.2 28.4,358.7 33.1,358.7 38.1,352.4 48,360.25 54.2,367.75 63.6,372.1 68.3,368.5 73,369 76.9,352.9 81.6,347.4 87.3,339.3 92.5,345.1 98,344 102.7,343.5 107.3,361.5 112.5,348.5 116.7,350.9 121.4,352.6 126.6,349.8 131.9,355.7 137,353.4 141.7,347.75 146.4,345.1 151.1,342.75 155.8,341.2 159.7,349 165.2,362 170.6,362.3 175.3,364.6 180,362.3 185.5,365.9 190.2,368.1 194.8,358.1 200.3,355.25 205,357.6 210.5,354.5 214.7,358.4 219.8,354.2 224.5,363.1 229.7,376.3 233.9,374.3 239.4,374.3 244.1,376.3 248.75,364.6 254.2,350.25 259.7,354.2 264.4,353.4 269.1,356 273.75,359.6 278.4,360.7 283.1,352.1 288.6,349 294.1,350.6 298.75,353.7 303.4,357.6 308.9,363.4 312.8,362.3 318.3,359.9 326.9,356.3 332.3,358.7 337.5,346.7 342.5,363.8 347.2,369.3 352.7,368.5 357.3,370.9 361.25,370.6 366.25,376.3 371.4,353.7 376.1,350.6 380.8,348.2 386.25,349 391.7,346.3 395.9,354.5 401.1,360.25 406.6,368.2 411.6,364.3 415.9,367 420.3,366.2 425.3,373.7 430,364.6 435.5,363.1 440.2,364.6 445.6,363.1 450.3,362.3 455,369.3 460.5,375.6 465.2,370.6 469.8,368.5 474.5,370.6 479.2,366.5 484.4,359.6 489.1,357.1 494.1,359.9 498.22,383.2 498.22,383.2" fill="url(#rf)"/>
<polygon points="507.8,383.2 507.8,383.2 509.7,380.25 513.6,383 513.73,383.2 513.73,383.2" fill="url(#rf)"/>
<polygon points="529.33,383.2 529.33,383.2 531.6,381.8 533.1,381.5 536.59,383.2 536.59,383.2" fill="url(#rf)"/>
<polygon points="569.51,383.2 569.51,383.2 570.3,381 574.5,373.7 578.4,367.75 582.3,359.6 587,358.4 592.5,362.3 597.2,362.3 601.9,369.6 607.3,364.9 611.25,356 616.7,352.9 622.2,356 626.6,357.3 631.6,349 636.25,348.2 640.9,352.4 655.8,352.4 660.5,350.6 665.9,361.5 670.6,363.4 675.3,361.2 680,363.4 684.7,361.2 694.1,365.9 700.3,367 705.8,375.25 708.9,367.4 714.1,368.5 719.8,356.5 726.1,363.8 733.9,368.5 740.2,372.75 744.8,372.75 750.3,378.7 754.7,381 758.9,374.3 763.6,374.3 769.1,368.5 773.75,369.6 778.4,373.2 783.1,369.3 788.6,380.25 793.3,368.5 798.75,371.7 803.4,370.1 808.1,377.1 812.5,368.5 816.7,376.3 822.5,379.5 828.4,376.8 832.3,374.3 837.8,377.1 842.5,368.5 847.2,360.7 852.2,351.3 857.3,356.5 861.25,356.8 866.7,350.25 870.6,352.6 870.6,383.2" fill="url(#rf)"/>
<line x1="12.5" y1="331" x2="870.6" y2="331" stroke="#1818a8" stroke-width="1.5"/>
<line x1="12.5" y1="383.2" x2="870.6" y2="383.2" stroke="#1818a8" stroke-width="1.5"/>
<polyline points="12.5,346.7 18.3,361.2 23.75,361.2 28.4,358.7 33.1,358.7 38.1,352.4 48,360.25 54.2,367.75 63.6,372.1 68.3,368.5 73,369 76.9,352.9 81.6,347.4 87.3,339.3 92.5,345.1 98,344 102.7,343.5 107.3,361.5 112.5,348.5 116.7,350.9 121.4,352.6 126.6,349.8 131.9,355.7 137,353.4 141.7,347.75 146.4,345.1 151.1,342.75 155.8,341.2 159.7,349 165.2,362 170.6,362.3 175.3,364.6 180,362.3 185.5,365.9 190.2,368.1 194.8,358.1 200.3,355.25 205,357.6 210.5,354.5 214.7,358.4 219.8,354.2 224.5,363.1 229.7,376.3 233.9,374.3 239.4,374.3 244.1,376.3 248.75,364.6 254.2,350.25 259.7,354.2 264.4,353.4 269.1,356 273.75,359.6 278.4,360.7 283.1,352.1 288.6,349 294.1,350.6 298.75,353.7 303.4,357.6 308.9,363.4 312.8,362.3 318.3,359.9 326.9,356.3 332.3,358.7 337.5,346.7 342.5,363.8 347.2,369.3 352.7,368.5 357.3,370.9 361.25,370.6 366.25,376.3 371.4,353.7 376.1,350.6 380.8,348.2 386.25,349 391.7,346.3 395.9,354.5 401.1,360.25 406.6,368.2 411.6,364.3 415.9,367 420.3,366.2 425.3,373.7 430,364.6 435.5,363.1 440.2,364.6 445.6,363.1 450.3,362.3 455,369.3 460.5,375.6 465.2,370.6 469.8,368.5 474.5,370.6 479.2,366.5 484.4,359.6 489.1,357.1 494.1,359.9" stroke="#f28a2e" stroke-width="1" stroke-linejoin="round"/>
<polyline points="494.1,359.9 498.75,386.2 504.2,388.8" stroke="#2fe02f" stroke-width="1" stroke-linejoin="round"/>
<polyline points="504.2,388.8 509.7,380.25 513.6,383" stroke="#f28a2e" stroke-width="1" stroke-linejoin="round"/>
<polyline points="513.6,383 518.3,390.4 523.4,393.2 527.7,384.2" stroke="#2fe02f" stroke-width="1" stroke-linejoin="round"/>
<polyline points="527.7,384.2 531.6,381.8 533.1,381.5 537,383.4" stroke="#f28a2e" stroke-width="1" stroke-linejoin="round"/>
<polyline points="537,383.4 544,389.6 551.1,394 558.9,397.4 562.8,386.5 567.5,388.8" stroke="#2fe02f" stroke-width="1" stroke-linejoin="round"/>
<polyline points="567.5,388.8 570.3,381 574.5,373.7 578.4,367.75 582.3,359.6 587,358.4 592.5,362.3 597.2,362.3 601.9,369.6 607.3,364.9 611.25,356 616.7,352.9 622.2,356 626.6,357.3 631.6,349 636.25,348.2 640.9,352.4 655.8,352.4 660.5,350.6 665.9,361.5 670.6,363.4 675.3,361.2 680,363.4 684.7,361.2 694.1,365.9 700.3,367 705.8,375.25 708.9,367.4 714.1,368.5 719.8,356.5 726.1,363.8 733.9,368.5 740.2,372.75 744.8,372.75 750.3,378.7 754.7,381 758.9,374.3 763.6,374.3 769.1,368.5 773.75,369.6 778.4,373.2 783.1,369.3 788.6,380.25 793.3,368.5 798.75,371.7 803.4,370.1 808.1,377.1 812.5,368.5 816.7,376.3 822.5,379.5 828.4,376.8 832.3,374.3 837.8,377.1 842.5,368.5 847.2,360.7 852.2,351.3 857.3,356.5 861.25,356.8 866.7,350.25 870.6,352.6" stroke="#f28a2e" stroke-width="1" stroke-linejoin="round"/>
</g>
<rect x="13.2" y="328.2" width="16.8" height="12" fill="#3c434c"/>
<text x="14.3" y="338.8" font-size="11" fill="#e8852e" textLength="15" lengthAdjust="spacingAndGlyphs">RSI</text>
<g id="borders" fill="none" stroke="#aebccb" stroke-width="1.2" shape-rendering="crispEdges">
<rect x="12.5" y="36.5" width="873" height="219.5"/>
<rect x="12.5" y="262.5" width="873" height="58.8"/>
<rect x="12.5" y="327.5" width="873" height="73"/>
</g>
<g shape-rendering="crispEdges" stroke="#c9d3de" stroke-width="1">
<line x1="33.4" y1="400.5" x2="33.4" y2="404" />
<line x1="63.4" y1="400.5" x2="63.4" y2="404" />
<line x1="92.4" y1="400.5" x2="92.4" y2="404" />
<line x1="121.5" y1="400.5" x2="121.5" y2="404" />
<line x1="151.5" y1="400.5" x2="151.5" y2="404" />
<line x1="180.6" y1="400.5" x2="180.6" y2="404" />
<line x1="210.4" y1="400.5" x2="210.4" y2="404" />
<line x1="239.4" y1="400.5" x2="239.4" y2="404" />
<line x1="268.4" y1="400.5" x2="268.4" y2="404" />
<line x1="298.4" y1="400.5" x2="298.4" y2="404" />
<line x1="327.5" y1="400.5" x2="327.5" y2="404" />
<line x1="357.5" y1="400.5" x2="357.5" y2="404" />
<line x1="386.4" y1="400.5" x2="386.4" y2="404" />
<line x1="415.3" y1="400.5" x2="415.3" y2="404" />
<line x1="445.4" y1="400.5" x2="445.4" y2="404" />
<line x1="474.4" y1="400.5" x2="474.4" y2="404" />
<line x1="504.4" y1="400.5" x2="504.4" y2="404" />
<line x1="533.3" y1="400.5" x2="533.3" y2="404" />
<line x1="562.5" y1="400.5" x2="562.5" y2="404" />
<line x1="592.4" y1="400.5" x2="592.4" y2="404" />
<line x1="621.5" y1="400.5" x2="621.5" y2="404" />
<line x1="651.4" y1="400.5" x2="651.4" y2="404" />
<line x1="680.5" y1="400.5" x2="680.5" y2="404" />
<line x1="709.5" y1="400.5" x2="709.5" y2="404" />
<line x1="739.3" y1="400.5" x2="739.3" y2="404" />
<line x1="768.5" y1="400.5" x2="768.5" y2="404" />
<line x1="798.6" y1="400.5" x2="798.6" y2="404" />
<line x1="827.5" y1="400.5" x2="827.5" y2="404" />
<line x1="857.4" y1="400.5" x2="857.4" y2="404" />
</g>
<path d="M12.7 377.5H74.2q1.5 0 1.5 1.5V394.7l-1.8 1.8H12.7z" fill="url(#lab)" stroke="#aebdd2" stroke-width="1"/>
<rect x="11.9" y="377" width="2" height="27" fill="#cfeee2"/>
<text x="20.2" y="391.2" font-size="11" fill="#f2f4f7" textLength="48.5" lengthAdjust="spacingAndGlyphs">Май 2021</text>
<path d="M151.7 377.5H220.2q1.5 0 1.5 1.5V394.7l-1.8 1.8H151.7z" fill="url(#lab)" stroke="#aebdd2" stroke-width="1"/>
<rect x="150.9" y="377" width="2" height="27" fill="#cfeee2"/>
<text x="159.2" y="391.2" font-size="11" fill="#f2f4f7" textLength="56" lengthAdjust="spacingAndGlyphs">Июнь 2021</text>
<path d="M798.7 377.5H866.2q1.5 0 1.5 1.5V394.7l-1.8 1.8H798.7z" fill="url(#lab)" stroke="#aebdd2" stroke-width="1"/>
<rect x="797.9" y="377" width="2" height="27" fill="#cfeee2"/>
<text x="806.2" y="391.2" font-size="11" fill="#f2f4f7" textLength="55" lengthAdjust="spacingAndGlyphs">Июль 2021</text>
<text x="27.1" y="423.2" font-size="11.5" fill="#f4f4f4" stroke="#f4f4f4" stroke-width="0.2" textLength="11.2" lengthAdjust="spacingAndGlyphs">26</text>
<text x="57.1" y="423.2" font-size="11.5" fill="#f4f4f4" stroke="#f4f4f4" stroke-width="0.2" textLength="11.2" lengthAdjust="spacingAndGlyphs">27</text>
<text x="86.1" y="423.2" font-size="11.5" fill="#f4f4f4" stroke="#f4f4f4" stroke-width="0.2" textLength="11.2" lengthAdjust="spacingAndGlyphs">28</text>
<text x="115.2" y="423.2" font-size="11.5" fill="#f4f4f4" stroke="#f4f4f4" stroke-width="0.2" textLength="11.2" lengthAdjust="spacingAndGlyphs">31</text>
<text x="148" y="423.2" font-size="11.5" fill="#f4f4f4" stroke="#f4f4f4" stroke-width="0.2" textLength="5.6" lengthAdjust="spacingAndGlyphs">1</text>
<text x="177.1" y="423.2" font-size="11.5" fill="#f4f4f4" stroke="#f4f4f4" stroke-width="0.2" textLength="5.6" lengthAdjust="spacingAndGlyphs">2</text>
<text x="206.9" y="423.2" font-size="11.5" fill="#f4f4f4" stroke="#f4f4f4" stroke-width="0.2" textLength="5.6" lengthAdjust="spacingAndGlyphs">3</text>
<text x="235.9" y="423.2" font-size="11.5" fill="#f4f4f4" stroke="#f4f4f4" stroke-width="0.2" textLength="5.6" lengthAdjust="spacingAndGlyphs">4</text>
<text x="264.9" y="423.2" font-size="11.5" fill="#f4f4f4" stroke="#f4f4f4" stroke-width="0.2" textLength="5.6" lengthAdjust="spacingAndGlyphs">7</text>
<text x="294.9" y="423.2" font-size="11.5" fill="#f4f4f4" stroke="#f4f4f4" stroke-width="0.2" textLength="5.6" lengthAdjust="spacingAndGlyphs">8</text>
<text x="324" y="423.2" font-size="11.5" fill="#f4f4f4" stroke="#f4f4f4" stroke-width="0.2" textLength="5.6" lengthAdjust="spacingAndGlyphs">9</text>
<text x="351.2" y="423.2" font-size="11.5" fill="#f4f4f4" stroke="#f4f4f4" stroke-width="0.2" textLength="11.2" lengthAdjust="spacingAndGlyphs">10</text>
<text x="380.1" y="423.2" font-size="11.5" fill="#f4f4f4" stroke="#f4f4f4" stroke-width="0.2" textLength="11.2" lengthAdjust="spacingAndGlyphs">11</text>
<text x="409" y="423.2" font-size="11.5" fill="#f4f4f4" stroke="#f4f4f4" stroke-width="0.2" textLength="11.2" lengthAdjust="spacingAndGlyphs">14</text>
<text x="439.1" y="423.2" font-size="11.5" fill="#f4f4f4" stroke="#f4f4f4" stroke-width="0.2" textLength="11.2" lengthAdjust="spacingAndGlyphs">15</text>
<text x="468.1" y="423.2" font-size="11.5" fill="#f4f4f4" stroke="#f4f4f4" stroke-width="0.2" textLength="11.2" lengthAdjust="spacingAndGlyphs">16</text>
<text x="498.1" y="423.2" font-size="11.5" fill="#f4f4f4" stroke="#f4f4f4" stroke-width="0.2" textLength="11.2" lengthAdjust="spacingAndGlyphs">17</text>
<text x="527" y="423.2" font-size="11.5" fill="#f4f4f4" stroke="#f4f4f4" stroke-width="0.2" textLength="11.2" lengthAdjust="spacingAndGlyphs">18</text>
<text x="556.2" y="423.2" font-size="11.5" fill="#f4f4f4" stroke="#f4f4f4" stroke-width="0.2" textLength="11.2" lengthAdjust="spacingAndGlyphs">21</text>
<text x="586.1" y="423.2" font-size="11.5" fill="#f4f4f4" stroke="#f4f4f4" stroke-width="0.2" textLength="11.2" lengthAdjust="spacingAndGlyphs">22</text>
<text x="615.2" y="423.2" font-size="11.5" fill="#f4f4f4" stroke="#f4f4f4" stroke-width="0.2" textLength="11.2" lengthAdjust="spacingAndGlyphs">23</text>
<text x="645.1" y="423.2" font-size="11.5" fill="#f4f4f4" stroke="#f4f4f4" stroke-width="0.2" textLength="11.2" lengthAdjust="spacingAndGlyphs">24</text>
<text x="674.2" y="423.2" font-size="11.5" fill="#f4f4f4" stroke="#f4f4f4" stroke-width="0.2" textLength="11.2" lengthAdjust="spacingAndGlyphs">25</text>
<text x="703.2" y="423.2" font-size="11.5" fill="#f4f4f4" stroke="#f4f4f4" stroke-width="0.2" textLength="11.2" lengthAdjust="spacingAndGlyphs">28</text>
<text x="733" y="423.2" font-size="11.5" fill="#f4f4f4" stroke="#f4f4f4" stroke-width="0.2" textLength="11.2" lengthAdjust="spacingAndGlyphs">29</text>
<text x="762.2" y="423.2" font-size="11.5" fill="#f4f4f4" stroke="#f4f4f4" stroke-width="0.2" textLength="11.2" lengthAdjust="spacingAndGlyphs">30</text>
<text x="795.1" y="423.2" font-size="11.5" fill="#f4f4f4" stroke="#f4f4f4" stroke-width="0.2" textLength="5.6" lengthAdjust="spacingAndGlyphs">1</text>
<text x="824" y="423.2" font-size="11.5" fill="#f4f4f4" stroke="#f4f4f4" stroke-width="0.2" textLength="5.6" lengthAdjust="spacingAndGlyphs">2</text>
<text x="853.9" y="423.2" font-size="11.5" fill="#f4f4f4" stroke="#f4f4f4" stroke-width="0.2" textLength="5.6" lengthAdjust="spacingAndGlyphs">5</text>
<text x="893" y="65.8" font-size="11" fill="#fafafa" stroke="#fafafa" stroke-width="0.3" textLength="32.5" lengthAdjust="spacingAndGlyphs">1.4200</text>
<text x="893" y="103.85" font-size="11" fill="#fafafa" stroke="#fafafa" stroke-width="0.3" textLength="32.5" lengthAdjust="spacingAndGlyphs">1.4100</text>
<text x="893" y="141.9" font-size="11" fill="#fafafa" stroke="#fafafa" stroke-width="0.3" textLength="32.5" lengthAdjust="spacingAndGlyphs">1.4000</text>
<text x="893" y="179.95" font-size="11" fill="#fafafa" stroke="#fafafa" stroke-width="0.3" textLength="32.5" lengthAdjust="spacingAndGlyphs">1.3900</text>
<text x="893" y="218" font-size="11" fill="#fafafa" stroke="#fafafa" stroke-width="0.3" textLength="32.5" lengthAdjust="spacingAndGlyphs">1.3800</text>
<text x="893" y="256.05" font-size="11" fill="#fafafa" stroke="#fafafa" stroke-width="0.3" textLength="32.5" lengthAdjust="spacingAndGlyphs">1.3700</text>
<text x="894.2" y="281.8" font-size="11" fill="#fafafa" stroke="#fafafa" stroke-width="0.3" textLength="33" lengthAdjust="spacingAndGlyphs">+0.000</text>
<text x="894.5" y="310.5" font-size="11" fill="#fafafa" stroke="#fafafa" stroke-width="0.3" textLength="33" lengthAdjust="spacingAndGlyphs">-0.005</text>
<text x="893" y="349.8" font-size="11" fill="#fafafa" stroke="#fafafa" stroke-width="0.3">60</text>
<text x="893" y="375.6" font-size="11" fill="#fafafa" stroke="#fafafa" stroke-width="0.3">40</text>
<rect x="885" y="185" width="48" height="20.7" fill="#ffffff"/>
<text x="893.6" y="199.3" font-size="11" fill="#4b5160" textLength="33" lengthAdjust="spacingAndGlyphs">1.3843</text>
</svg></body></html>
